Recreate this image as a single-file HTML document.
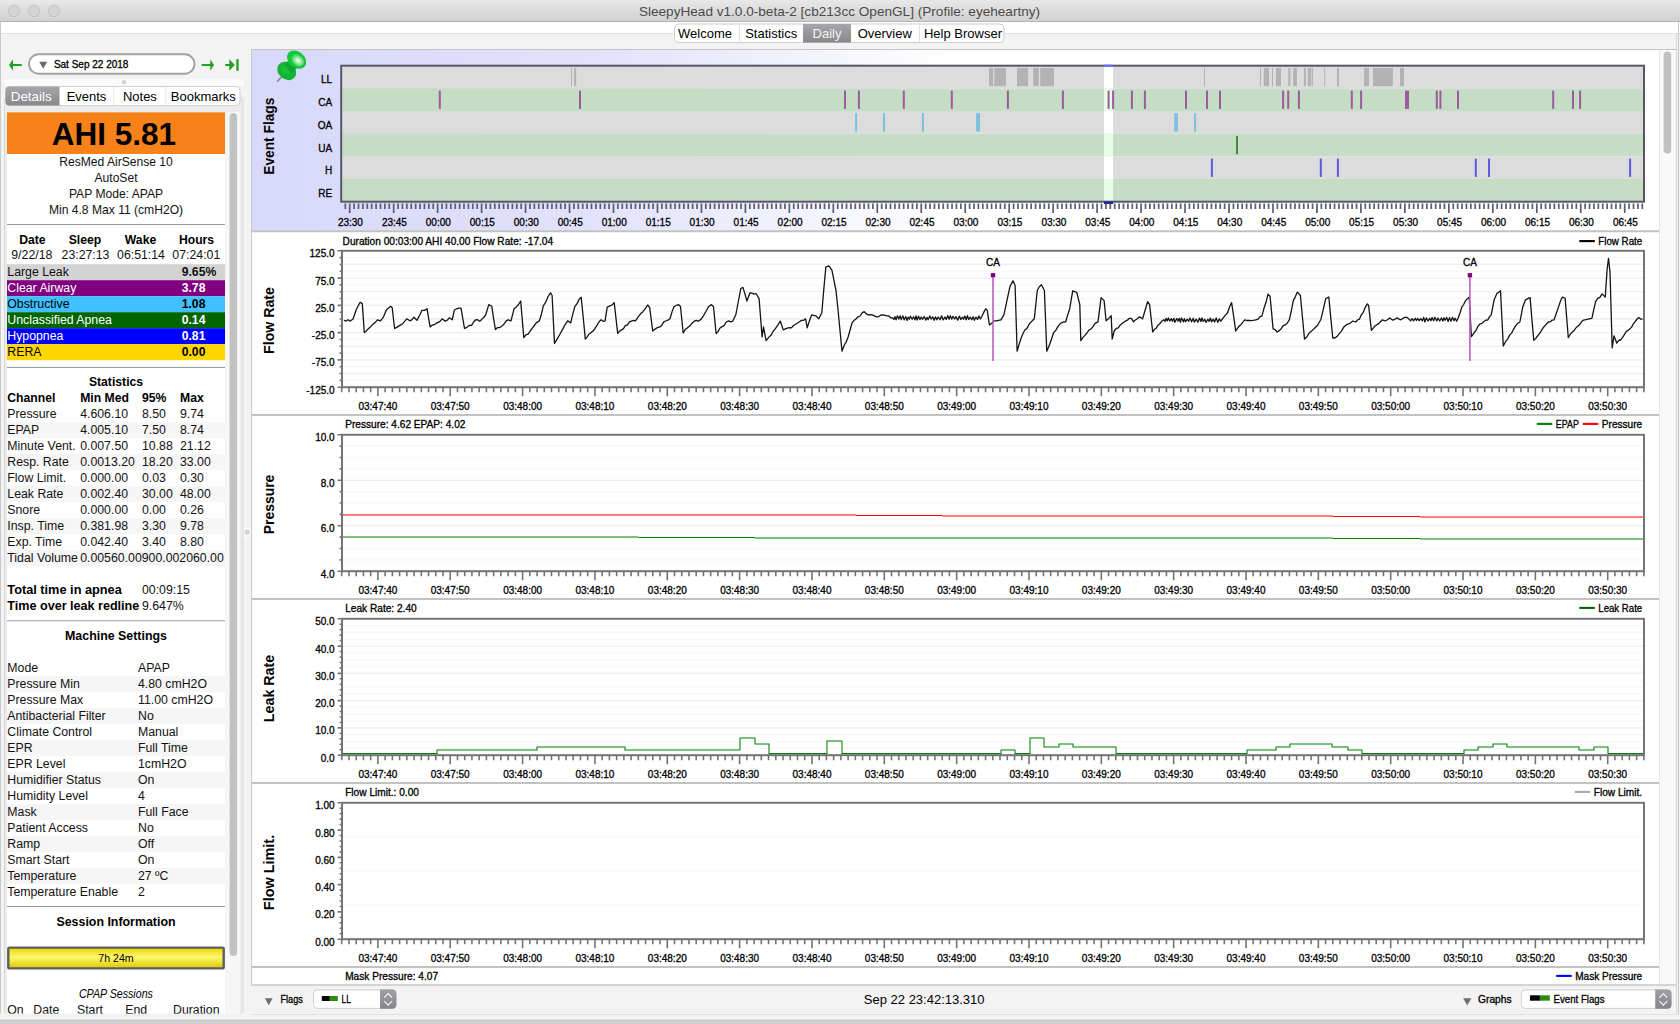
<!DOCTYPE html><html><head><meta charset="utf-8"><style>html,body{margin:0;padding:0;width:1680px;height:1024px;overflow:hidden;background:#f3f3f3}svg{display:block}text{font-family:"Liberation Sans",sans-serif}.sm{stroke:#000;stroke-width:0.3px}</style></head><body><svg width="1680" height="1024" viewBox="0 0 1680 1024"><defs>
<linearGradient id="tbar" x1="0" y1="0" x2="0" y2="1"><stop offset="0" stop-color="#e8e8e8"/><stop offset="1" stop-color="#d1d1d1"/></linearGradient>
<linearGradient id="lav" x1="0" y1="0" x2="1" y2="0"><stop offset="0" stop-color="#d9d9fb"/><stop offset="0.33" stop-color="#dcdcfb"/><stop offset="0.55" stop-color="#ffffff"/><stop offset="1" stop-color="#ffffff"/></linearGradient>
<linearGradient id="selTab" x1="0" y1="0" x2="0" y2="1"><stop offset="0" stop-color="#a6a6ab"/><stop offset="1" stop-color="#87878c"/></linearGradient>
<linearGradient id="step" x1="0" y1="0" x2="0" y2="1"><stop offset="0" stop-color="#a0a0a4"/><stop offset="1" stop-color="#85858a"/></linearGradient>
<radialGradient id="pinHead" cx="0.55" cy="0.5" r="0.6"><stop offset="0" stop-color="#f4fff4"/><stop offset="0.35" stop-color="#a8f0b4"/><stop offset="1" stop-color="#14c83c"/></radialGradient>
<radialGradient id="pinBody" cx="0.4" cy="0.5" r="0.6"><stop offset="0" stop-color="#5fd66c"/><stop offset="1" stop-color="#139d24"/></radialGradient>
</defs><rect x="0.0" y="0.0" width="1680.0" height="1024.0" fill="#f3f3f3" /><rect x="0.0" y="0.0" width="1680.0" height="21.0" fill="url(#tbar)" /><line x1="0.0" y1="21.5" x2="1680.0" y2="21.5" stroke="#b5b5b5" stroke-width="1" /><circle cx="14" cy="10.8" r="5.8" fill="#d4d4d4" stroke="#bcbcbc" stroke-width="0.8"/><circle cx="34" cy="10.8" r="5.8" fill="#d4d4d4" stroke="#bcbcbc" stroke-width="0.8"/><circle cx="54" cy="10.8" r="5.8" fill="#d4d4d4" stroke="#bcbcbc" stroke-width="0.8"/><text x="839.5" y="15.7" font-size="13.6" text-anchor="middle" fill="#4b4b4b" >SleepyHead v1.0.0-beta-2 [cb213cc OpenGL] (Profile: eyeheartny)</text><rect x="0.0" y="22.0" width="1680.0" height="11.0" fill="#ffffff" /><line x1="0.0" y1="33.5" x2="1680.0" y2="33.5" stroke="#e2e2e2" stroke-width="1" /><line x1="0.5" y1="22.0" x2="0.5" y2="1024.0" stroke="#c9c9c9" stroke-width="1" /><line x1="1678.5" y1="22.0" x2="1678.5" y2="1024.0" stroke="#c9c9c9" stroke-width="1" /><rect x="0.0" y="1016.0" width="1680.0" height="8.0" fill="#c6c6c6" /><line x1="0.0" y1="1015.5" x2="1680.0" y2="1015.5" stroke="#bdbdbd" stroke-width="1" /><rect x="674.5" y="24" width="329.5" height="18.5" rx="4" fill="#ffffff" stroke="#cfcfcf" stroke-width="1"/><rect x="803.0" y="24.0" width="48.0" height="18.5" fill="url(#selTab)" /><line x1="739.5" y1="25.0" x2="739.5" y2="42.0" stroke="#e0e0e0" stroke-width="1" /><line x1="919.5" y1="25.0" x2="919.5" y2="42.0" stroke="#e0e0e0" stroke-width="1" /><text x="705.0" y="37.5" font-size="13" text-anchor="middle" >Welcome</text><text x="771.2" y="37.5" font-size="13" text-anchor="middle" >Statistics</text><text x="827.0" y="37.5" font-size="13" text-anchor="middle" fill="#f4f4f4" >Daily</text><text x="884.8" y="37.5" font-size="13" text-anchor="middle" >Overview</text><text x="963.0" y="37.5" font-size="13" text-anchor="middle" >Help Browser</text><path d="M9 65 L13 59.2 L13 70.8 Z" fill="#22a022"/><line x1="12.0" y1="65.0" x2="21.0" y2="65.0" stroke="#22a022" stroke-width="2.2" stroke-linecap="round"/><line x1="202.5" y1="65.0" x2="211.0" y2="65.0" stroke="#22a022" stroke-width="2.2" stroke-linecap="round"/><path d="M214 65 L210.3 59.2 L210.3 70.8 Z" fill="#22a022"/><line x1="226.0" y1="65.0" x2="230.0" y2="65.0" stroke="#22a022" stroke-width="2.2" stroke-linecap="round"/><path d="M234.8 65 L229.3 59.2 L229.3 70.8 Z" fill="#22a022"/><rect x="236.3" y="59.2" width="2.3" height="11.6" fill="#22a022" /><rect x="29" y="54.2" width="165.5" height="19.5" rx="9.75" fill="#ffffff" stroke="#a2a2a2" stroke-width="1.9"/><path d="M39.2 61.8 L47.2 61.8 L43.2 68.8 Z" fill="#6b6b6b"/><text x="53.9" y="67.7" font-size="10" class="sm" >Sat Sep 22 2018</text><rect x="4.0" y="79.3" width="240.0" height="6.5" fill="#fbfbfb" /><circle cx="124" cy="82.3" r="2.3" fill="#d2d2d2"/><rect x="4.5" y="96.5" width="238.5" height="918" rx="4" fill="#ebebeb" stroke="#d9d9d9" stroke-width="1"/><rect x="5.5" y="86.5" width="234.5" height="19" rx="4" fill="#ffffff" stroke="#d2d2d2" stroke-width="1"/><path d="M9.5 86.5 H59.5 V105.5 H9.5 A4 4 0 0 1 5.5 101.5 V90.5 A4 4 0 0 1 9.5 86.5 Z" fill="url(#selTab)"/><line x1="113.8" y1="87.0" x2="113.8" y2="105.0" stroke="#e3e3e3" stroke-width="1" /><line x1="166.0" y1="87.0" x2="166.0" y2="105.0" stroke="#e3e3e3" stroke-width="1" /><text x="31.2" y="101.0" font-size="13.4" text-anchor="middle" fill="#ffffff" >Details</text><text x="86.5" y="101.0" font-size="13" text-anchor="middle" >Events</text><text x="139.9" y="101.0" font-size="13" text-anchor="middle" >Notes</text><text x="203.3" y="101.0" font-size="13" text-anchor="middle" >Bookmarks</text><rect x="7.0" y="112.0" width="218.0" height="902.0" fill="#ffffff" /><rect x="225.3" y="112.0" width="14.7" height="902.0" fill="#f7f7f7" /><rect x="229.6" y="113" width="7.5" height="843" rx="3.75" fill="#c2c2c2"/><rect x="7.0" y="112.3" width="218.0" height="41.7" fill="#f8821a" /><text x="113.9" y="144.6" font-size="31.5" font-weight="bold" text-anchor="middle" >AHI 5.81</text><text x="116.0" y="165.7" font-size="12.1" text-anchor="middle" fill="#111" >ResMed AirSense 10</text><text x="116.0" y="181.7" font-size="12.1" text-anchor="middle" fill="#111" >AutoSet</text><text x="116.0" y="197.7" font-size="12.1" text-anchor="middle" fill="#111" >PAP Mode: APAP</text><text x="116.0" y="213.7" font-size="12.1" text-anchor="middle" fill="#111" >Min 4.8 Max 11 (cmH2O)</text><line x1="7.0" y1="224.5" x2="225.0" y2="224.5" stroke="#9a9a9a" stroke-width="1" /><text x="32.4" y="243.6" font-size="12.2" font-weight="bold" text-anchor="middle" >Date</text><text x="85.0" y="243.6" font-size="12.2" font-weight="bold" text-anchor="middle" >Sleep</text><text x="140.5" y="243.6" font-size="12.2" font-weight="bold" text-anchor="middle" >Wake</text><text x="196.5" y="243.6" font-size="12.2" font-weight="bold" text-anchor="middle" >Hours</text><text x="31.8" y="259.3" font-size="12.3" text-anchor="middle" fill="#111" >9/22/18</text><text x="85.5" y="259.3" font-size="12.3" text-anchor="middle" fill="#111" >23:27:13</text><text x="141.0" y="259.3" font-size="12.3" text-anchor="middle" fill="#111" >06:51:14</text><text x="196.3" y="259.3" font-size="12.3" text-anchor="middle" fill="#111" >07:24:01</text><rect x="7.0" y="264.2" width="218.0" height="16.0" fill="#d3d3d3" /><text x="7.3" y="276.2" font-size="12.3" fill="#111" >Large Leak</text><text x="181.7" y="276.2" font-size="12.2" font-weight="bold" fill="#111" >9.65%</text><rect x="7.0" y="280.2" width="218.0" height="16.0" fill="#800080" /><text x="7.3" y="292.2" font-size="12.3" fill="#fff" >Clear Airway</text><text x="181.7" y="292.2" font-size="12.2" font-weight="bold" fill="#fff" >3.78</text><rect x="7.0" y="296.2" width="218.0" height="16.0" fill="#40c0ff" /><text x="7.3" y="308.2" font-size="12.3" >Obstructive</text><text x="181.7" y="308.2" font-size="12.2" font-weight="bold" >1.08</text><rect x="7.0" y="312.2" width="218.0" height="16.0" fill="#006400" /><text x="7.3" y="324.2" font-size="12.3" fill="#fff" >Unclassified Apnea</text><text x="181.7" y="324.2" font-size="12.2" font-weight="bold" fill="#fff" >0.14</text><rect x="7.0" y="328.2" width="218.0" height="16.0" fill="#0000ff" /><text x="7.3" y="340.2" font-size="12.3" fill="#fff" >Hypopnea</text><text x="181.7" y="340.2" font-size="12.2" font-weight="bold" fill="#fff" >0.81</text><rect x="7.0" y="344.2" width="218.0" height="16.0" fill="#ffd700" /><text x="7.3" y="356.2" font-size="12.3" >RERA</text><text x="181.7" y="356.2" font-size="12.2" font-weight="bold" >0.00</text><line x1="7.0" y1="367.5" x2="225.0" y2="367.5" stroke="#9a9a9a" stroke-width="1" /><text x="116.0" y="386.0" font-size="12.2" font-weight="bold" text-anchor="middle" >Statistics</text><text x="7.3" y="401.8" font-size="12.2" font-weight="bold" >Channel</text><text x="80.2" y="401.8" font-size="12.2" font-weight="bold" >Min</text><text x="104.5" y="401.8" font-size="12.2" font-weight="bold" >Med</text><text x="142.0" y="401.8" font-size="12.2" font-weight="bold" >95%</text><text x="180.0" y="401.8" font-size="12.2" font-weight="bold" >Max</text><text x="7.3" y="418.0" font-size="12.3" fill="#111" >Pressure</text><text x="80.2" y="418.0" font-size="12.3" fill="#111" >4.606.10</text><text x="142.0" y="418.0" font-size="12.3" fill="#111" >8.50</text><text x="180.0" y="418.0" font-size="12.3" fill="#111" >9.74</text><rect x="7.0" y="422.0" width="218.0" height="16.0" fill="#f6f6f6" /><text x="7.3" y="434.0" font-size="12.3" fill="#111" >EPAP</text><text x="80.2" y="434.0" font-size="12.3" fill="#111" >4.005.10</text><text x="142.0" y="434.0" font-size="12.3" fill="#111" >7.50</text><text x="180.0" y="434.0" font-size="12.3" fill="#111" >8.74</text><text x="7.3" y="450.0" font-size="12.3" fill="#111" >Minute Vent.</text><text x="80.2" y="450.0" font-size="12.3" fill="#111" >0.007.50</text><text x="142.0" y="450.0" font-size="12.3" fill="#111" >10.88</text><text x="180.0" y="450.0" font-size="12.3" fill="#111" >21.12</text><rect x="7.0" y="454.0" width="218.0" height="16.0" fill="#f6f6f6" /><text x="7.3" y="466.0" font-size="12.3" fill="#111" >Resp. Rate</text><text x="80.2" y="466.0" font-size="12.3" fill="#111" >0.0013.20</text><text x="142.0" y="466.0" font-size="12.3" fill="#111" >18.20</text><text x="180.0" y="466.0" font-size="12.3" fill="#111" >33.00</text><text x="7.3" y="482.0" font-size="12.3" fill="#111" >Flow Limit.</text><text x="80.2" y="482.0" font-size="12.3" fill="#111" >0.000.00</text><text x="142.0" y="482.0" font-size="12.3" fill="#111" >0.03</text><text x="180.0" y="482.0" font-size="12.3" fill="#111" >0.30</text><rect x="7.0" y="486.0" width="218.0" height="16.0" fill="#f6f6f6" /><text x="7.3" y="498.0" font-size="12.3" fill="#111" >Leak Rate</text><text x="80.2" y="498.0" font-size="12.3" fill="#111" >0.002.40</text><text x="142.0" y="498.0" font-size="12.3" fill="#111" >30.00</text><text x="180.0" y="498.0" font-size="12.3" fill="#111" >48.00</text><text x="7.3" y="514.0" font-size="12.3" fill="#111" >Snore</text><text x="80.2" y="514.0" font-size="12.3" fill="#111" >0.000.00</text><text x="142.0" y="514.0" font-size="12.3" fill="#111" >0.00</text><text x="180.0" y="514.0" font-size="12.3" fill="#111" >0.26</text><rect x="7.0" y="518.0" width="218.0" height="16.0" fill="#f6f6f6" /><text x="7.3" y="530.0" font-size="12.3" fill="#111" >Insp. Time</text><text x="80.2" y="530.0" font-size="12.3" fill="#111" >0.381.98</text><text x="142.0" y="530.0" font-size="12.3" fill="#111" >3.30</text><text x="180.0" y="530.0" font-size="12.3" fill="#111" >9.78</text><text x="7.3" y="546.0" font-size="12.3" fill="#111" >Exp. Time</text><text x="80.2" y="546.0" font-size="12.3" fill="#111" >0.042.40</text><text x="142.0" y="546.0" font-size="12.3" fill="#111" >3.40</text><text x="180.0" y="546.0" font-size="12.3" fill="#111" >8.80</text><rect x="7.0" y="550.0" width="218.0" height="16.0" fill="#f6f6f6" /><text x="7.3" y="562.0" font-size="12.3" fill="#111" >Tidal Volume</text><text x="80.2" y="562.0" font-size="12.3" fill="#111" >0.00560.00900.002060.00</text><text x="7.3" y="594.0" font-size="12" font-weight="bold" textLength="114.5" lengthAdjust="spacingAndGlyphs">Total time in apnea</text><text x="142.0" y="594.0" font-size="12.3" fill="#111" >00:09:15</text><text x="7.3" y="610.0" font-size="12" font-weight="bold" textLength="132" lengthAdjust="spacingAndGlyphs">Time over leak redline</text><text x="142.0" y="610.0" font-size="12.3" fill="#111" >9.647%</text><line x1="7.0" y1="620.8" x2="225.0" y2="620.8" stroke="#9a9a9a" stroke-width="1" /><text x="116.0" y="639.8" font-size="12.4" font-weight="bold" text-anchor="middle" >Machine Settings</text><text x="7.3" y="671.5" font-size="12.3" fill="#111" >Mode</text><text x="138.0" y="671.5" font-size="12.3" fill="#111" >APAP</text><rect x="7.0" y="676.0" width="218.0" height="16.0" fill="#f6f6f6" /><text x="7.3" y="687.5" font-size="12.3" fill="#111" >Pressure Min</text><text x="138.0" y="687.5" font-size="12.3" fill="#111" >4.80 cmH2O</text><text x="7.3" y="703.5" font-size="12.3" fill="#111" >Pressure Max</text><text x="138.0" y="703.5" font-size="12.3" fill="#111" >11.00 cmH2O</text><rect x="7.0" y="708.0" width="218.0" height="16.0" fill="#f6f6f6" /><text x="7.3" y="719.5" font-size="12.3" fill="#111" >Antibacterial Filter</text><text x="138.0" y="719.5" font-size="12.3" fill="#111" >No</text><text x="7.3" y="735.5" font-size="12.3" fill="#111" >Climate Control</text><text x="138.0" y="735.5" font-size="12.3" fill="#111" >Manual</text><rect x="7.0" y="740.0" width="218.0" height="16.0" fill="#f6f6f6" /><text x="7.3" y="751.5" font-size="12.3" fill="#111" >EPR</text><text x="138.0" y="751.5" font-size="12.3" fill="#111" >Full Time</text><text x="7.3" y="767.5" font-size="12.3" fill="#111" >EPR Level</text><text x="138.0" y="767.5" font-size="12.3" fill="#111" >1cmH2O</text><rect x="7.0" y="772.0" width="218.0" height="16.0" fill="#f6f6f6" /><text x="7.3" y="783.5" font-size="12.3" fill="#111" >Humidifier Status</text><text x="138.0" y="783.5" font-size="12.3" fill="#111" >On</text><text x="7.3" y="799.5" font-size="12.3" fill="#111" >Humidity Level</text><text x="138.0" y="799.5" font-size="12.3" fill="#111" >4</text><rect x="7.0" y="804.0" width="218.0" height="16.0" fill="#f6f6f6" /><text x="7.3" y="815.5" font-size="12.3" fill="#111" >Mask</text><text x="138.0" y="815.5" font-size="12.3" fill="#111" >Full Face</text><text x="7.3" y="831.5" font-size="12.3" fill="#111" >Patient Access</text><text x="138.0" y="831.5" font-size="12.3" fill="#111" >No</text><rect x="7.0" y="836.0" width="218.0" height="16.0" fill="#f6f6f6" /><text x="7.3" y="847.5" font-size="12.3" fill="#111" >Ramp</text><text x="138.0" y="847.5" font-size="12.3" fill="#111" >Off</text><text x="7.3" y="863.5" font-size="12.3" fill="#111" >Smart Start</text><text x="138.0" y="863.5" font-size="12.3" fill="#111" >On</text><rect x="7.0" y="868.0" width="218.0" height="16.0" fill="#f6f6f6" /><text x="7.3" y="879.5" font-size="12.3" fill="#111" >Temperature</text><text x="138.0" y="879.5" font-size="12.3" fill="#111" >27 ºC</text><text x="7.3" y="895.5" font-size="12.3" fill="#111" >Temperature Enable</text><text x="138.0" y="895.5" font-size="12.3" fill="#111" >2</text><line x1="7.0" y1="906.5" x2="225.0" y2="906.5" stroke="#9a9a9a" stroke-width="1" /><text x="116.0" y="925.5" font-size="12.4" font-weight="bold" text-anchor="middle" >Session Information</text><linearGradient id="ybar" x1="0" y1="0" x2="0" y2="1"><stop offset="0" stop-color="#e6d400"/><stop offset="0.45" stop-color="#fff86e"/><stop offset="1" stop-color="#dcc800"/></linearGradient><rect x="8.3" y="947.6" width="215.4" height="20.8" rx="1" fill="url(#ybar)" stroke="#5e5e5e" stroke-width="2.4"/><text x="116.0" y="961.6" font-size="10.6" text-anchor="middle" >7h 24m</text><text x="115.9" y="997.6" font-size="12" text-anchor="middle" font-style="italic" textLength="74" lengthAdjust="spacingAndGlyphs">CPAP Sessions</text><text x="7.3" y="1013.5" font-size="12.3" fill="#111" >On</text><text x="33.3" y="1013.5" font-size="12.3" fill="#111" >Date</text><text x="77.0" y="1013.5" font-size="12.3" fill="#111" >Start</text><text x="125.2" y="1013.5" font-size="12.3" fill="#111" >End</text><text x="173.0" y="1013.5" font-size="12.3" fill="#111" >Duration</text><rect x="0.0" y="1013.6" width="250.0" height="2.4" fill="#f3f3f3" /><rect x="251.0" y="49.5" width="1408.0" height="935.5" fill="#ffffff" /><linearGradient id="lav2" gradientUnits="userSpaceOnUse" x1="251" y1="0" x2="1659" y2="0"><stop offset="0" stop-color="#d8d8fa"/><stop offset="0.248" stop-color="#e2e2fc"/><stop offset="0.496" stop-color="#ffffff"/><stop offset="1" stop-color="#ffffff"/></linearGradient><rect x="251.0" y="49.5" width="1408.0" height="181.0" fill="url(#lav2)" /><line x1="251.0" y1="49.5" x2="1677.0" y2="49.5" stroke="#c4c4c4" stroke-width="1" /><line x1="251.5" y1="49.5" x2="251.5" y2="985.0" stroke="#c9c9c9" stroke-width="1" /><rect x="341.2" y="65.7" width="1302.8" height="22.7" fill="#dcdcdc" /><text x="332.2" y="83.4" font-size="10" text-anchor="end" class="sm" >LL</text><rect x="341.2" y="88.4" width="1302.8" height="22.7" fill="#c6ddc5" /><text x="332.2" y="106.2" font-size="10" text-anchor="end" class="sm" >CA</text><rect x="341.2" y="111.0" width="1302.8" height="22.7" fill="#dcdcdc" /><text x="332.2" y="128.9" font-size="10" text-anchor="end" class="sm" >OA</text><rect x="341.2" y="133.7" width="1302.8" height="22.7" fill="#c6ddc5" /><text x="332.2" y="151.7" font-size="10" text-anchor="end" class="sm" >UA</text><rect x="341.2" y="156.4" width="1302.8" height="22.7" fill="#dcdcdc" /><text x="332.2" y="174.4" font-size="10" text-anchor="end" class="sm" >H</text><rect x="341.2" y="179.0" width="1302.8" height="22.7" fill="#c6ddc5" /><text x="332.2" y="197.2" font-size="10" text-anchor="end" class="sm" >RE</text><rect x="1104.0" y="65.7" width="9.1" height="22.7" fill="#ffffff" /><rect x="1104.0" y="88.4" width="9.1" height="22.7" fill="#e8fde6" /><rect x="1104.0" y="111.0" width="9.1" height="22.7" fill="#ffffff" /><rect x="1104.0" y="133.7" width="9.1" height="22.7" fill="#e8fde6" /><rect x="1104.0" y="156.4" width="9.1" height="22.7" fill="#ffffff" /><rect x="1104.0" y="179.0" width="9.1" height="22.7" fill="#e8fde6" /><rect x="571.0" y="67.9" width="1.0" height="18.3" fill="#b3b3b3" /><rect x="574.0" y="67.9" width="2.2" height="18.3" fill="#b3b3b3" /><rect x="989.0" y="67.9" width="4.1" height="18.3" fill="#b3b3b3" /><rect x="994.3" y="67.9" width="11.6" height="18.3" fill="#b3b3b3" /><rect x="1017.0" y="67.9" width="11.1" height="18.3" fill="#b3b3b3" /><rect x="1033.2" y="67.9" width="5.6" height="18.3" fill="#b3b3b3" /><rect x="1040.2" y="67.9" width="13.8" height="18.3" fill="#b3b3b3" /><rect x="1204.0" y="67.9" width="1.0" height="18.3" fill="#b3b3b3" /><rect x="1260.0" y="67.9" width="1.0" height="18.3" fill="#b3b3b3" /><rect x="1263.9" y="67.9" width="5.1" height="18.3" fill="#b3b3b3" /><rect x="1272.0" y="67.9" width="1.0" height="18.3" fill="#b3b3b3" /><rect x="1276.0" y="67.9" width="5.0" height="18.3" fill="#b3b3b3" /><rect x="1288.3" y="67.9" width="2.0" height="18.3" fill="#b3b3b3" /><rect x="1293.2" y="67.9" width="3.7" height="18.3" fill="#b3b3b3" /><rect x="1303.9" y="67.9" width="2.0" height="18.3" fill="#b3b3b3" /><rect x="1307.8" y="67.9" width="3.6" height="18.3" fill="#b3b3b3" /><rect x="1312.1" y="67.9" width="1.0" height="18.3" fill="#b3b3b3" /><rect x="1324.2" y="67.9" width="1.0" height="18.3" fill="#b3b3b3" /><rect x="1337.0" y="67.9" width="2.0" height="18.3" fill="#b3b3b3" /><rect x="1364.1" y="67.9" width="4.9" height="18.3" fill="#b3b3b3" /><rect x="1373.0" y="67.9" width="19.9" height="18.3" fill="#b3b3b3" /><rect x="1400.0" y="67.9" width="4.0" height="18.3" fill="#b3b3b3" /><rect x="438.8" y="90.6" width="2.0" height="18.3" fill="#9d5a9c" /><rect x="579.0" y="90.6" width="2.0" height="18.3" fill="#9d5a9c" /><rect x="844.0" y="90.6" width="2.0" height="18.3" fill="#9d5a9c" /><rect x="857.9" y="90.6" width="2.0" height="18.3" fill="#9d5a9c" /><rect x="902.8" y="90.6" width="2.0" height="18.3" fill="#9d5a9c" /><rect x="950.8" y="90.6" width="2.0" height="18.3" fill="#9d5a9c" /><rect x="1006.9" y="90.6" width="2.0" height="18.3" fill="#9d5a9c" /><rect x="1061.9" y="90.6" width="2.0" height="18.3" fill="#9d5a9c" /><rect x="1107.6" y="90.6" width="2.0" height="18.3" fill="#9d5a9c" /><rect x="1112.1" y="90.6" width="2.0" height="18.3" fill="#9d5a9c" /><rect x="1130.9" y="90.6" width="2.0" height="18.3" fill="#9d5a9c" /><rect x="1143.9" y="90.6" width="2.0" height="18.3" fill="#9d5a9c" /><rect x="1185.0" y="90.6" width="2.0" height="18.3" fill="#9d5a9c" /><rect x="1206.0" y="90.6" width="2.0" height="18.3" fill="#9d5a9c" /><rect x="1219.0" y="90.6" width="2.0" height="18.3" fill="#9d5a9c" /><rect x="1282.1" y="90.6" width="2.0" height="18.3" fill="#9d5a9c" /><rect x="1287.2" y="90.6" width="2.0" height="18.3" fill="#9d5a9c" /><rect x="1297.9" y="90.6" width="2.0" height="18.3" fill="#9d5a9c" /><rect x="1350.8" y="90.6" width="2.0" height="18.3" fill="#9d5a9c" /><rect x="1360.1" y="90.6" width="2.0" height="18.3" fill="#9d5a9c" /><rect x="1435.8" y="90.6" width="2.0" height="18.3" fill="#9d5a9c" /><rect x="1439.4" y="90.6" width="2.0" height="18.3" fill="#9d5a9c" /><rect x="1457.0" y="90.6" width="2.0" height="18.3" fill="#9d5a9c" /><rect x="1552.2" y="90.6" width="2.0" height="18.3" fill="#9d5a9c" /><rect x="1572.0" y="90.6" width="2.0" height="18.3" fill="#9d5a9c" /><rect x="1579.1" y="90.6" width="2.0" height="18.3" fill="#9d5a9c" /><rect x="1405.0" y="90.6" width="4.0" height="18.3" fill="#9d5a9c" /><rect x="855.1" y="113.2" width="2.0" height="18.3" fill="#7cc0e2" /><rect x="883.0" y="113.2" width="2.0" height="18.3" fill="#7cc0e2" /><rect x="921.9" y="113.2" width="2.0" height="18.3" fill="#7cc0e2" /><rect x="1194.1" y="113.2" width="2.0" height="18.3" fill="#7cc0e2" /><rect x="976.1" y="113.2" width="3.9" height="18.3" fill="#7cc0e2" /><rect x="1174.2" y="113.2" width="3.7" height="18.3" fill="#7cc0e2" /><rect x="1236.0" y="135.9" width="2.0" height="18.3" fill="#3f8a3f" /><rect x="1210.9" y="158.6" width="2.0" height="18.3" fill="#5a5ae6" /><rect x="1319.8" y="158.6" width="2.0" height="18.3" fill="#5a5ae6" /><rect x="1336.9" y="158.6" width="2.0" height="18.3" fill="#5a5ae6" /><rect x="1474.8" y="158.6" width="2.0" height="18.3" fill="#5a5ae6" /><rect x="1488.0" y="158.6" width="2.0" height="18.3" fill="#5a5ae6" /><rect x="1629.1" y="158.6" width="2.0" height="18.3" fill="#5a5ae6" /><rect x="341.2" y="65.7" width="1302.8" height="136.0" fill="none" stroke="#575768" stroke-width="2"/><line x1="1104.0" y1="65.7" x2="1113.1" y2="65.7" stroke="#6a6aff" stroke-width="2" /><rect x="1104.0" y="201.5" width="9.1" height="2.5" fill="#2020a0" /><path d="M345.30 203.5v5.5M349.70 203.5v9.5M354.10 203.5v5.5M358.49 203.5v5.5M362.89 203.5v5.5M367.29 203.5v5.5M371.68 203.5v5.5M376.08 203.5v5.5M380.48 203.5v5.5M384.87 203.5v5.5M389.27 203.5v5.5M393.67 203.5v9.5M398.06 203.5v5.5M402.46 203.5v5.5M406.86 203.5v5.5M411.25 203.5v5.5M415.65 203.5v5.5M420.05 203.5v5.5M424.44 203.5v5.5M428.84 203.5v5.5M433.24 203.5v5.5M437.63 203.5v9.5M442.03 203.5v5.5M446.43 203.5v5.5M450.82 203.5v5.5M455.22 203.5v5.5M459.62 203.5v5.5M464.01 203.5v5.5M468.41 203.5v5.5M472.80 203.5v5.5M477.20 203.5v5.5M481.60 203.5v9.5M485.99 203.5v5.5M490.39 203.5v5.5M494.79 203.5v5.5M499.18 203.5v5.5M503.58 203.5v5.5M507.98 203.5v5.5M512.37 203.5v5.5M516.77 203.5v5.5M521.17 203.5v5.5M525.56 203.5v9.5M529.96 203.5v5.5M534.36 203.5v5.5M538.75 203.5v5.5M543.15 203.5v5.5M547.55 203.5v5.5M551.94 203.5v5.5M556.34 203.5v5.5M560.74 203.5v5.5M565.13 203.5v5.5M569.53 203.5v9.5M573.93 203.5v5.5M578.32 203.5v5.5M582.72 203.5v5.5M587.12 203.5v5.5M591.51 203.5v5.5M595.91 203.5v5.5M600.31 203.5v5.5M604.70 203.5v5.5M609.10 203.5v5.5M613.50 203.5v9.5M617.89 203.5v5.5M622.29 203.5v5.5M626.69 203.5v5.5M631.08 203.5v5.5M635.48 203.5v5.5M639.88 203.5v5.5M644.27 203.5v5.5M648.67 203.5v5.5M653.07 203.5v5.5M657.46 203.5v9.5M661.86 203.5v5.5M666.26 203.5v5.5M670.65 203.5v5.5M675.05 203.5v5.5M679.44 203.5v5.5M683.84 203.5v5.5M688.24 203.5v5.5M692.63 203.5v5.5M697.03 203.5v5.5M701.43 203.5v9.5M705.82 203.5v5.5M710.22 203.5v5.5M714.62 203.5v5.5M719.01 203.5v5.5M723.41 203.5v5.5M727.81 203.5v5.5M732.20 203.5v5.5M736.60 203.5v5.5M741.00 203.5v5.5M745.39 203.5v9.5M749.79 203.5v5.5M754.19 203.5v5.5M758.58 203.5v5.5M762.98 203.5v5.5M767.38 203.5v5.5M771.77 203.5v5.5M776.17 203.5v5.5M780.57 203.5v5.5M784.96 203.5v5.5M789.36 203.5v9.5M793.76 203.5v5.5M798.15 203.5v5.5M802.55 203.5v5.5M806.95 203.5v5.5M811.34 203.5v5.5M815.74 203.5v5.5M820.14 203.5v5.5M824.53 203.5v5.5M828.93 203.5v5.5M833.33 203.5v9.5M837.72 203.5v5.5M842.12 203.5v5.5M846.52 203.5v5.5M850.91 203.5v5.5M855.31 203.5v5.5M859.71 203.5v5.5M864.10 203.5v5.5M868.50 203.5v5.5M872.90 203.5v5.5M877.29 203.5v9.5M881.69 203.5v5.5M886.09 203.5v5.5M890.48 203.5v5.5M894.88 203.5v5.5M899.28 203.5v5.5M903.67 203.5v5.5M908.07 203.5v5.5M912.46 203.5v5.5M916.86 203.5v5.5M921.26 203.5v9.5M925.65 203.5v5.5M930.05 203.5v5.5M934.45 203.5v5.5M938.84 203.5v5.5M943.24 203.5v5.5M947.64 203.5v5.5M952.03 203.5v5.5M956.43 203.5v5.5M960.83 203.5v5.5M965.22 203.5v9.5M969.62 203.5v5.5M974.02 203.5v5.5M978.41 203.5v5.5M982.81 203.5v5.5M987.21 203.5v5.5M991.60 203.5v5.5M996.00 203.5v5.5M1000.40 203.5v5.5M1004.79 203.5v5.5M1009.19 203.5v9.5M1013.59 203.5v5.5M1017.98 203.5v5.5M1022.38 203.5v5.5M1026.78 203.5v5.5M1031.17 203.5v5.5M1035.57 203.5v5.5M1039.97 203.5v5.5M1044.36 203.5v5.5M1048.76 203.5v5.5M1053.16 203.5v9.5M1057.55 203.5v5.5M1061.95 203.5v5.5M1066.35 203.5v5.5M1070.74 203.5v5.5M1075.14 203.5v5.5M1079.54 203.5v5.5M1083.93 203.5v5.5M1088.33 203.5v5.5M1092.73 203.5v5.5M1097.12 203.5v9.5M1101.52 203.5v5.5M1105.92 203.5v5.5M1110.31 203.5v5.5M1114.71 203.5v5.5M1119.11 203.5v5.5M1123.50 203.5v5.5M1127.90 203.5v5.5M1132.29 203.5v5.5M1136.69 203.5v5.5M1141.09 203.5v9.5M1145.48 203.5v5.5M1149.88 203.5v5.5M1154.28 203.5v5.5M1158.67 203.5v5.5M1163.07 203.5v5.5M1167.47 203.5v5.5M1171.86 203.5v5.5M1176.26 203.5v5.5M1180.66 203.5v5.5M1185.05 203.5v9.5M1189.45 203.5v5.5M1193.85 203.5v5.5M1198.24 203.5v5.5M1202.64 203.5v5.5M1207.04 203.5v5.5M1211.43 203.5v5.5M1215.83 203.5v5.5M1220.23 203.5v5.5M1224.62 203.5v5.5M1229.02 203.5v9.5M1233.42 203.5v5.5M1237.81 203.5v5.5M1242.21 203.5v5.5M1246.61 203.5v5.5M1251.00 203.5v5.5M1255.40 203.5v5.5M1259.80 203.5v5.5M1264.19 203.5v5.5M1268.59 203.5v5.5M1272.99 203.5v9.5M1277.38 203.5v5.5M1281.78 203.5v5.5M1286.18 203.5v5.5M1290.57 203.5v5.5M1294.97 203.5v5.5M1299.37 203.5v5.5M1303.76 203.5v5.5M1308.16 203.5v5.5M1312.56 203.5v5.5M1316.95 203.5v9.5M1321.35 203.5v5.5M1325.75 203.5v5.5M1330.14 203.5v5.5M1334.54 203.5v5.5M1338.93 203.5v5.5M1343.33 203.5v5.5M1347.73 203.5v5.5M1352.12 203.5v5.5M1356.52 203.5v5.5M1360.92 203.5v9.5M1365.31 203.5v5.5M1369.71 203.5v5.5M1374.11 203.5v5.5M1378.50 203.5v5.5M1382.90 203.5v5.5M1387.30 203.5v5.5M1391.69 203.5v5.5M1396.09 203.5v5.5M1400.49 203.5v5.5M1404.88 203.5v9.5M1409.28 203.5v5.5M1413.68 203.5v5.5M1418.07 203.5v5.5M1422.47 203.5v5.5M1426.87 203.5v5.5M1431.26 203.5v5.5M1435.66 203.5v5.5M1440.06 203.5v5.5M1444.45 203.5v5.5M1448.85 203.5v9.5M1453.25 203.5v5.5M1457.64 203.5v5.5M1462.04 203.5v5.5M1466.44 203.5v5.5M1470.83 203.5v5.5M1475.23 203.5v5.5M1479.63 203.5v5.5M1484.02 203.5v5.5M1488.42 203.5v5.5M1492.82 203.5v9.5M1497.21 203.5v5.5M1501.61 203.5v5.5M1506.01 203.5v5.5M1510.40 203.5v5.5M1514.80 203.5v5.5M1519.20 203.5v5.5M1523.59 203.5v5.5M1527.99 203.5v5.5M1532.39 203.5v5.5M1536.78 203.5v9.5M1541.18 203.5v5.5M1545.58 203.5v5.5M1549.97 203.5v5.5M1554.37 203.5v5.5M1558.77 203.5v5.5M1563.16 203.5v5.5M1567.56 203.5v5.5M1571.95 203.5v5.5M1576.35 203.5v5.5M1580.75 203.5v9.5M1585.14 203.5v5.5M1589.54 203.5v5.5M1593.94 203.5v5.5M1598.33 203.5v5.5M1602.73 203.5v5.5M1607.13 203.5v5.5M1611.52 203.5v5.5M1615.92 203.5v5.5M1620.32 203.5v5.5M1624.71 203.5v9.5M1629.11 203.5v5.5M1633.51 203.5v5.5M1637.90 203.5v5.5M1642.30 203.5v5.5" stroke="#5c5c6e" stroke-width="1.7" fill="none"/><text x="350.4" y="225.9" font-size="10" text-anchor="middle" class="sm" >23:30</text><text x="394.4" y="225.9" font-size="10" text-anchor="middle" class="sm" >23:45</text><text x="438.3" y="225.9" font-size="10" text-anchor="middle" class="sm" >00:00</text><text x="482.3" y="225.9" font-size="10" text-anchor="middle" class="sm" >00:15</text><text x="526.3" y="225.9" font-size="10" text-anchor="middle" class="sm" >00:30</text><text x="570.2" y="225.9" font-size="10" text-anchor="middle" class="sm" >00:45</text><text x="614.2" y="225.9" font-size="10" text-anchor="middle" class="sm" >01:00</text><text x="658.2" y="225.9" font-size="10" text-anchor="middle" class="sm" >01:15</text><text x="702.1" y="225.9" font-size="10" text-anchor="middle" class="sm" >01:30</text><text x="746.1" y="225.9" font-size="10" text-anchor="middle" class="sm" >01:45</text><text x="790.1" y="225.9" font-size="10" text-anchor="middle" class="sm" >02:00</text><text x="834.0" y="225.9" font-size="10" text-anchor="middle" class="sm" >02:15</text><text x="878.0" y="225.9" font-size="10" text-anchor="middle" class="sm" >02:30</text><text x="922.0" y="225.9" font-size="10" text-anchor="middle" class="sm" >02:45</text><text x="965.9" y="225.9" font-size="10" text-anchor="middle" class="sm" >03:00</text><text x="1009.9" y="225.9" font-size="10" text-anchor="middle" class="sm" >03:15</text><text x="1053.9" y="225.9" font-size="10" text-anchor="middle" class="sm" >03:30</text><text x="1097.8" y="225.9" font-size="10" text-anchor="middle" class="sm" >03:45</text><text x="1141.8" y="225.9" font-size="10" text-anchor="middle" class="sm" >04:00</text><text x="1185.8" y="225.9" font-size="10" text-anchor="middle" class="sm" >04:15</text><text x="1229.7" y="225.9" font-size="10" text-anchor="middle" class="sm" >04:30</text><text x="1273.7" y="225.9" font-size="10" text-anchor="middle" class="sm" >04:45</text><text x="1317.7" y="225.9" font-size="10" text-anchor="middle" class="sm" >05:00</text><text x="1361.6" y="225.9" font-size="10" text-anchor="middle" class="sm" >05:15</text><text x="1405.6" y="225.9" font-size="10" text-anchor="middle" class="sm" >05:30</text><text x="1449.6" y="225.9" font-size="10" text-anchor="middle" class="sm" >05:45</text><text x="1493.5" y="225.9" font-size="10" text-anchor="middle" class="sm" >06:00</text><text x="1537.5" y="225.9" font-size="10" text-anchor="middle" class="sm" >06:15</text><text x="1581.4" y="225.9" font-size="10" text-anchor="middle" class="sm" >06:30</text><text x="1625.4" y="225.9" font-size="10" text-anchor="middle" class="sm" >06:45</text><text transform="translate(274.4,136.2) rotate(-90)" font-size="14.9" font-weight="bold" text-anchor="middle" textLength="77.2" lengthAdjust="spacingAndGlyphs">Event Flags</text><g>
<line x1="281" y1="77.5" x2="277.6" y2="81.2" stroke="#8a7f8c" stroke-width="1.6" stroke-linecap="round"/>
<ellipse cx="286.7" cy="71" rx="10.3" ry="8.3" transform="rotate(40 286.7 71)" fill="#12b432"/>
<ellipse cx="285.5" cy="70" rx="6" ry="4" transform="rotate(40 285.5 70)" fill="#20c040" opacity="0.6"/>
<path d="M284 64 L292 58 L299 66.5 L291 73 Z" fill="#0fa82e"/>
<ellipse cx="296.6" cy="59.6" rx="10.6" ry="7.9" transform="rotate(40 296.6 59.6)" fill="#14c83c"/>
<ellipse cx="297.6" cy="60.2" rx="7.2" ry="5.2" transform="rotate(40 297.6 60.2)" fill="url(#pinHead)"/>
</g><line x1="251.0" y1="231.3" x2="1659.0" y2="231.3" stroke="#c2c2c2" stroke-width="2" /><text x="342.6" y="244.7" font-size="10.15" class="sm" >Duration 00:03:00 AHI 40.00 Flow Rate: -17.04</text><text x="1598.3" y="244.7" font-size="10" class="sm" textLength="43.9" lengthAdjust="spacingAndGlyphs">Flow Rate</text><line x1="1579.3" y1="241.1" x2="1594.8" y2="241.1" stroke="#000000" stroke-width="2.1" /><line x1="342.0" y1="257.6" x2="1644.0" y2="257.6" stroke="#f8f8f8" stroke-width="1.3" /><line x1="342.0" y1="264.4" x2="1644.0" y2="264.4" stroke="#eeeeee" stroke-width="1.3" /><line x1="342.0" y1="271.3" x2="1644.0" y2="271.3" stroke="#f8f8f8" stroke-width="1.3" /><line x1="342.0" y1="278.1" x2="1644.0" y2="278.1" stroke="#eeeeee" stroke-width="1.3" /><line x1="342.0" y1="284.9" x2="1644.0" y2="284.9" stroke="#f8f8f8" stroke-width="1.3" /><line x1="342.0" y1="291.7" x2="1644.0" y2="291.7" stroke="#eeeeee" stroke-width="1.3" /><line x1="342.0" y1="298.5" x2="1644.0" y2="298.5" stroke="#f8f8f8" stroke-width="1.3" /><line x1="342.0" y1="305.4" x2="1644.0" y2="305.4" stroke="#eeeeee" stroke-width="1.3" /><line x1="342.0" y1="312.2" x2="1644.0" y2="312.2" stroke="#f8f8f8" stroke-width="1.3" /><line x1="342.0" y1="319.0" x2="1644.0" y2="319.0" stroke="#eeeeee" stroke-width="1.3" /><line x1="342.0" y1="325.8" x2="1644.0" y2="325.8" stroke="#f8f8f8" stroke-width="1.3" /><line x1="342.0" y1="332.6" x2="1644.0" y2="332.6" stroke="#eeeeee" stroke-width="1.3" /><line x1="342.0" y1="339.5" x2="1644.0" y2="339.5" stroke="#f8f8f8" stroke-width="1.3" /><line x1="342.0" y1="346.3" x2="1644.0" y2="346.3" stroke="#eeeeee" stroke-width="1.3" /><line x1="342.0" y1="353.1" x2="1644.0" y2="353.1" stroke="#f8f8f8" stroke-width="1.3" /><line x1="342.0" y1="359.9" x2="1644.0" y2="359.9" stroke="#eeeeee" stroke-width="1.3" /><line x1="342.0" y1="366.7" x2="1644.0" y2="366.7" stroke="#f8f8f8" stroke-width="1.3" /><line x1="342.0" y1="373.6" x2="1644.0" y2="373.6" stroke="#eeeeee" stroke-width="1.3" /><line x1="342.0" y1="380.4" x2="1644.0" y2="380.4" stroke="#f8f8f8" stroke-width="1.3" /><path d="M337.6 250.80H342.0M339.6 257.62H342.0M339.6 264.44H342.0M339.6 271.26H342.0M337.6 278.08H342.0M339.6 284.90H342.0M339.6 291.72H342.0M339.6 298.54H342.0M337.6 305.36H342.0M339.6 312.18H342.0M339.6 319.00H342.0M339.6 325.82H342.0M337.6 332.64H342.0M339.6 339.46H342.0M339.6 346.28H342.0M339.6 353.10H342.0M337.6 359.92H342.0M339.6 366.74H342.0M339.6 373.56H342.0M339.6 380.38H342.0M337.6 387.20H342.0" stroke="#747474" stroke-width="1.6" fill="none"/><text x="334.6" y="257.2" font-size="10" text-anchor="end" class="sm" >125.0</text><text x="334.6" y="284.5" font-size="10" text-anchor="end" class="sm" >75.0</text><text x="334.6" y="311.8" font-size="10" text-anchor="end" class="sm" >25.0</text><text x="334.6" y="339.0" font-size="10" text-anchor="end" class="sm" >-25.0</text><text x="334.6" y="366.3" font-size="10" text-anchor="end" class="sm" >-75.0</text><text x="334.6" y="393.6" font-size="10" text-anchor="end" class="sm" >-125.0</text><path d="M341.73 387.2v5.0M348.96 387.2v5.0M356.20 387.2v5.0M363.43 387.2v5.0M370.67 387.2v5.0M377.90 387.2v9.0M385.13 387.2v5.0M392.37 387.2v5.0M399.60 387.2v5.0M406.84 387.2v5.0M414.07 387.2v5.0M421.31 387.2v5.0M428.54 387.2v5.0M435.77 387.2v5.0M443.01 387.2v5.0M450.24 387.2v9.0M457.48 387.2v5.0M464.71 387.2v5.0M471.94 387.2v5.0M479.18 387.2v5.0M486.41 387.2v5.0M493.65 387.2v5.0M500.88 387.2v5.0M508.12 387.2v5.0M515.35 387.2v5.0M522.58 387.2v9.0M529.82 387.2v5.0M537.05 387.2v5.0M544.29 387.2v5.0M551.52 387.2v5.0M558.75 387.2v5.0M565.99 387.2v5.0M573.22 387.2v5.0M580.46 387.2v5.0M587.69 387.2v5.0M594.93 387.2v9.0M602.16 387.2v5.0M609.39 387.2v5.0M616.63 387.2v5.0M623.86 387.2v5.0M631.10 387.2v5.0M638.33 387.2v5.0M645.57 387.2v5.0M652.80 387.2v5.0M660.03 387.2v5.0M667.27 387.2v9.0M674.50 387.2v5.0M681.74 387.2v5.0M688.97 387.2v5.0M696.20 387.2v5.0M703.44 387.2v5.0M710.67 387.2v5.0M717.91 387.2v5.0M725.14 387.2v5.0M732.38 387.2v5.0M739.61 387.2v9.0M746.84 387.2v5.0M754.08 387.2v5.0M761.31 387.2v5.0M768.55 387.2v5.0M775.78 387.2v5.0M783.02 387.2v5.0M790.25 387.2v5.0M797.48 387.2v5.0M804.72 387.2v5.0M811.95 387.2v9.0M819.19 387.2v5.0M826.42 387.2v5.0M833.65 387.2v5.0M840.89 387.2v5.0M848.12 387.2v5.0M855.36 387.2v5.0M862.59 387.2v5.0M869.83 387.2v5.0M877.06 387.2v5.0M884.29 387.2v9.0M891.53 387.2v5.0M898.76 387.2v5.0M906.00 387.2v5.0M913.23 387.2v5.0M920.47 387.2v5.0M927.70 387.2v5.0M934.93 387.2v5.0M942.17 387.2v5.0M949.40 387.2v5.0M956.64 387.2v9.0M963.87 387.2v5.0M971.10 387.2v5.0M978.34 387.2v5.0M985.57 387.2v5.0M992.81 387.2v5.0M1000.04 387.2v5.0M1007.28 387.2v5.0M1014.51 387.2v5.0M1021.74 387.2v5.0M1028.98 387.2v9.0M1036.21 387.2v5.0M1043.45 387.2v5.0M1050.68 387.2v5.0M1057.91 387.2v5.0M1065.15 387.2v5.0M1072.38 387.2v5.0M1079.62 387.2v5.0M1086.85 387.2v5.0M1094.09 387.2v5.0M1101.32 387.2v9.0M1108.55 387.2v5.0M1115.79 387.2v5.0M1123.02 387.2v5.0M1130.26 387.2v5.0M1137.49 387.2v5.0M1144.73 387.2v5.0M1151.96 387.2v5.0M1159.19 387.2v5.0M1166.43 387.2v5.0M1173.66 387.2v9.0M1180.90 387.2v5.0M1188.13 387.2v5.0M1195.36 387.2v5.0M1202.60 387.2v5.0M1209.83 387.2v5.0M1217.07 387.2v5.0M1224.30 387.2v5.0M1231.54 387.2v5.0M1238.77 387.2v5.0M1246.00 387.2v9.0M1253.24 387.2v5.0M1260.47 387.2v5.0M1267.71 387.2v5.0M1274.94 387.2v5.0M1282.18 387.2v5.0M1289.41 387.2v5.0M1296.64 387.2v5.0M1303.88 387.2v5.0M1311.11 387.2v5.0M1318.35 387.2v9.0M1325.58 387.2v5.0M1332.81 387.2v5.0M1340.05 387.2v5.0M1347.28 387.2v5.0M1354.52 387.2v5.0M1361.75 387.2v5.0M1368.99 387.2v5.0M1376.22 387.2v5.0M1383.45 387.2v5.0M1390.69 387.2v9.0M1397.92 387.2v5.0M1405.16 387.2v5.0M1412.39 387.2v5.0M1419.62 387.2v5.0M1426.86 387.2v5.0M1434.09 387.2v5.0M1441.33 387.2v5.0M1448.56 387.2v5.0M1455.80 387.2v5.0M1463.03 387.2v9.0M1470.26 387.2v5.0M1477.50 387.2v5.0M1484.73 387.2v5.0M1491.97 387.2v5.0M1499.20 387.2v5.0M1506.44 387.2v5.0M1513.67 387.2v5.0M1520.90 387.2v5.0M1528.14 387.2v5.0M1535.37 387.2v9.0M1542.61 387.2v5.0M1549.84 387.2v5.0M1557.07 387.2v5.0M1564.31 387.2v5.0M1571.54 387.2v5.0M1578.78 387.2v5.0M1586.01 387.2v5.0M1593.25 387.2v5.0M1600.48 387.2v5.0M1607.71 387.2v9.0M1614.95 387.2v5.0M1622.18 387.2v5.0M1629.42 387.2v5.0M1636.65 387.2v5.0M1643.89 387.2v5.0" stroke="#747474" stroke-width="1.6" fill="none"/><text x="377.9" y="409.8" font-size="10" text-anchor="middle" class="sm" >03:47:40</text><text x="450.2" y="409.8" font-size="10" text-anchor="middle" class="sm" >03:47:50</text><text x="522.6" y="409.8" font-size="10" text-anchor="middle" class="sm" >03:48:00</text><text x="594.9" y="409.8" font-size="10" text-anchor="middle" class="sm" >03:48:10</text><text x="667.3" y="409.8" font-size="10" text-anchor="middle" class="sm" >03:48:20</text><text x="739.6" y="409.8" font-size="10" text-anchor="middle" class="sm" >03:48:30</text><text x="812.0" y="409.8" font-size="10" text-anchor="middle" class="sm" >03:48:40</text><text x="884.3" y="409.8" font-size="10" text-anchor="middle" class="sm" >03:48:50</text><text x="956.6" y="409.8" font-size="10" text-anchor="middle" class="sm" >03:49:00</text><text x="1029.0" y="409.8" font-size="10" text-anchor="middle" class="sm" >03:49:10</text><text x="1101.3" y="409.8" font-size="10" text-anchor="middle" class="sm" >03:49:20</text><text x="1173.7" y="409.8" font-size="10" text-anchor="middle" class="sm" >03:49:30</text><text x="1246.0" y="409.8" font-size="10" text-anchor="middle" class="sm" >03:49:40</text><text x="1318.3" y="409.8" font-size="10" text-anchor="middle" class="sm" >03:49:50</text><text x="1390.7" y="409.8" font-size="10" text-anchor="middle" class="sm" >03:50:00</text><text x="1463.0" y="409.8" font-size="10" text-anchor="middle" class="sm" >03:50:10</text><text x="1535.4" y="409.8" font-size="10" text-anchor="middle" class="sm" >03:50:20</text><text x="1607.7" y="409.8" font-size="10" text-anchor="middle" class="sm" >03:50:30</text><text transform="translate(274.4,320.5) rotate(-90)" font-size="14.9" font-weight="bold" text-anchor="middle" textLength="66.9" lengthAdjust="spacingAndGlyphs">Flow Rate</text><line x1="251.0" y1="415.0" x2="1659.0" y2="415.0" stroke="#c2c2c2" stroke-width="2" /><text x="345.2" y="427.7" font-size="10.15" class="sm" >Pressure: 4.62 EPAP: 4.02</text><text x="1601.8" y="427.5" font-size="10" class="sm" textLength="40.4" lengthAdjust="spacingAndGlyphs">Pressure</text><line x1="1582.8" y1="423.9" x2="1598.3" y2="423.9" stroke="#ff0000" stroke-width="2.1" /><text x="1555.8" y="427.5" font-size="10" class="sm" textLength="23.0" lengthAdjust="spacingAndGlyphs">EPAP</text><line x1="1536.8" y1="423.9" x2="1552.3" y2="423.9" stroke="#008000" stroke-width="2.1" /><line x1="342.0" y1="446.2" x2="1644.0" y2="446.2" stroke="#f8f8f8" stroke-width="1.3" /><line x1="342.0" y1="457.5" x2="1644.0" y2="457.5" stroke="#f8f8f8" stroke-width="1.3" /><line x1="342.0" y1="468.9" x2="1644.0" y2="468.9" stroke="#f8f8f8" stroke-width="1.3" /><line x1="342.0" y1="480.3" x2="1644.0" y2="480.3" stroke="#eeeeee" stroke-width="1.3" /><line x1="342.0" y1="491.6" x2="1644.0" y2="491.6" stroke="#f8f8f8" stroke-width="1.3" /><line x1="342.0" y1="503.0" x2="1644.0" y2="503.0" stroke="#f8f8f8" stroke-width="1.3" /><line x1="342.0" y1="514.4" x2="1644.0" y2="514.4" stroke="#f8f8f8" stroke-width="1.3" /><line x1="342.0" y1="525.7" x2="1644.0" y2="525.7" stroke="#eeeeee" stroke-width="1.3" /><line x1="342.0" y1="537.1" x2="1644.0" y2="537.1" stroke="#f8f8f8" stroke-width="1.3" /><line x1="342.0" y1="548.5" x2="1644.0" y2="548.5" stroke="#f8f8f8" stroke-width="1.3" /><line x1="342.0" y1="559.8" x2="1644.0" y2="559.8" stroke="#f8f8f8" stroke-width="1.3" /><path d="M337.6 434.80H342.0M339.6 446.17H342.0M339.6 457.53H342.0M339.6 468.90H342.0M337.6 480.27H342.0M339.6 491.63H342.0M339.6 503.00H342.0M339.6 514.37H342.0M337.6 525.73H342.0M339.6 537.10H342.0M339.6 548.47H342.0M339.6 559.83H342.0M337.6 571.20H342.0" stroke="#747474" stroke-width="1.6" fill="none"/><text x="334.6" y="441.2" font-size="10" text-anchor="end" class="sm" >10.0</text><text x="334.6" y="486.7" font-size="10" text-anchor="end" class="sm" >8.0</text><text x="334.6" y="532.1" font-size="10" text-anchor="end" class="sm" >6.0</text><text x="334.6" y="577.6" font-size="10" text-anchor="end" class="sm" >4.0</text><path d="M341.73 571.2v5.0M348.96 571.2v5.0M356.20 571.2v5.0M363.43 571.2v5.0M370.67 571.2v5.0M377.90 571.2v9.0M385.13 571.2v5.0M392.37 571.2v5.0M399.60 571.2v5.0M406.84 571.2v5.0M414.07 571.2v5.0M421.31 571.2v5.0M428.54 571.2v5.0M435.77 571.2v5.0M443.01 571.2v5.0M450.24 571.2v9.0M457.48 571.2v5.0M464.71 571.2v5.0M471.94 571.2v5.0M479.18 571.2v5.0M486.41 571.2v5.0M493.65 571.2v5.0M500.88 571.2v5.0M508.12 571.2v5.0M515.35 571.2v5.0M522.58 571.2v9.0M529.82 571.2v5.0M537.05 571.2v5.0M544.29 571.2v5.0M551.52 571.2v5.0M558.75 571.2v5.0M565.99 571.2v5.0M573.22 571.2v5.0M580.46 571.2v5.0M587.69 571.2v5.0M594.93 571.2v9.0M602.16 571.2v5.0M609.39 571.2v5.0M616.63 571.2v5.0M623.86 571.2v5.0M631.10 571.2v5.0M638.33 571.2v5.0M645.57 571.2v5.0M652.80 571.2v5.0M660.03 571.2v5.0M667.27 571.2v9.0M674.50 571.2v5.0M681.74 571.2v5.0M688.97 571.2v5.0M696.20 571.2v5.0M703.44 571.2v5.0M710.67 571.2v5.0M717.91 571.2v5.0M725.14 571.2v5.0M732.38 571.2v5.0M739.61 571.2v9.0M746.84 571.2v5.0M754.08 571.2v5.0M761.31 571.2v5.0M768.55 571.2v5.0M775.78 571.2v5.0M783.02 571.2v5.0M790.25 571.2v5.0M797.48 571.2v5.0M804.72 571.2v5.0M811.95 571.2v9.0M819.19 571.2v5.0M826.42 571.2v5.0M833.65 571.2v5.0M840.89 571.2v5.0M848.12 571.2v5.0M855.36 571.2v5.0M862.59 571.2v5.0M869.83 571.2v5.0M877.06 571.2v5.0M884.29 571.2v9.0M891.53 571.2v5.0M898.76 571.2v5.0M906.00 571.2v5.0M913.23 571.2v5.0M920.47 571.2v5.0M927.70 571.2v5.0M934.93 571.2v5.0M942.17 571.2v5.0M949.40 571.2v5.0M956.64 571.2v9.0M963.87 571.2v5.0M971.10 571.2v5.0M978.34 571.2v5.0M985.57 571.2v5.0M992.81 571.2v5.0M1000.04 571.2v5.0M1007.28 571.2v5.0M1014.51 571.2v5.0M1021.74 571.2v5.0M1028.98 571.2v9.0M1036.21 571.2v5.0M1043.45 571.2v5.0M1050.68 571.2v5.0M1057.91 571.2v5.0M1065.15 571.2v5.0M1072.38 571.2v5.0M1079.62 571.2v5.0M1086.85 571.2v5.0M1094.09 571.2v5.0M1101.32 571.2v9.0M1108.55 571.2v5.0M1115.79 571.2v5.0M1123.02 571.2v5.0M1130.26 571.2v5.0M1137.49 571.2v5.0M1144.73 571.2v5.0M1151.96 571.2v5.0M1159.19 571.2v5.0M1166.43 571.2v5.0M1173.66 571.2v9.0M1180.90 571.2v5.0M1188.13 571.2v5.0M1195.36 571.2v5.0M1202.60 571.2v5.0M1209.83 571.2v5.0M1217.07 571.2v5.0M1224.30 571.2v5.0M1231.54 571.2v5.0M1238.77 571.2v5.0M1246.00 571.2v9.0M1253.24 571.2v5.0M1260.47 571.2v5.0M1267.71 571.2v5.0M1274.94 571.2v5.0M1282.18 571.2v5.0M1289.41 571.2v5.0M1296.64 571.2v5.0M1303.88 571.2v5.0M1311.11 571.2v5.0M1318.35 571.2v9.0M1325.58 571.2v5.0M1332.81 571.2v5.0M1340.05 571.2v5.0M1347.28 571.2v5.0M1354.52 571.2v5.0M1361.75 571.2v5.0M1368.99 571.2v5.0M1376.22 571.2v5.0M1383.45 571.2v5.0M1390.69 571.2v9.0M1397.92 571.2v5.0M1405.16 571.2v5.0M1412.39 571.2v5.0M1419.62 571.2v5.0M1426.86 571.2v5.0M1434.09 571.2v5.0M1441.33 571.2v5.0M1448.56 571.2v5.0M1455.80 571.2v5.0M1463.03 571.2v9.0M1470.26 571.2v5.0M1477.50 571.2v5.0M1484.73 571.2v5.0M1491.97 571.2v5.0M1499.20 571.2v5.0M1506.44 571.2v5.0M1513.67 571.2v5.0M1520.90 571.2v5.0M1528.14 571.2v5.0M1535.37 571.2v9.0M1542.61 571.2v5.0M1549.84 571.2v5.0M1557.07 571.2v5.0M1564.31 571.2v5.0M1571.54 571.2v5.0M1578.78 571.2v5.0M1586.01 571.2v5.0M1593.25 571.2v5.0M1600.48 571.2v5.0M1607.71 571.2v9.0M1614.95 571.2v5.0M1622.18 571.2v5.0M1629.42 571.2v5.0M1636.65 571.2v5.0M1643.89 571.2v5.0" stroke="#747474" stroke-width="1.6" fill="none"/><text x="377.9" y="593.8" font-size="10" text-anchor="middle" class="sm" >03:47:40</text><text x="450.2" y="593.8" font-size="10" text-anchor="middle" class="sm" >03:47:50</text><text x="522.6" y="593.8" font-size="10" text-anchor="middle" class="sm" >03:48:00</text><text x="594.9" y="593.8" font-size="10" text-anchor="middle" class="sm" >03:48:10</text><text x="667.3" y="593.8" font-size="10" text-anchor="middle" class="sm" >03:48:20</text><text x="739.6" y="593.8" font-size="10" text-anchor="middle" class="sm" >03:48:30</text><text x="812.0" y="593.8" font-size="10" text-anchor="middle" class="sm" >03:48:40</text><text x="884.3" y="593.8" font-size="10" text-anchor="middle" class="sm" >03:48:50</text><text x="956.6" y="593.8" font-size="10" text-anchor="middle" class="sm" >03:49:00</text><text x="1029.0" y="593.8" font-size="10" text-anchor="middle" class="sm" >03:49:10</text><text x="1101.3" y="593.8" font-size="10" text-anchor="middle" class="sm" >03:49:20</text><text x="1173.7" y="593.8" font-size="10" text-anchor="middle" class="sm" >03:49:30</text><text x="1246.0" y="593.8" font-size="10" text-anchor="middle" class="sm" >03:49:40</text><text x="1318.3" y="593.8" font-size="10" text-anchor="middle" class="sm" >03:49:50</text><text x="1390.7" y="593.8" font-size="10" text-anchor="middle" class="sm" >03:50:00</text><text x="1463.0" y="593.8" font-size="10" text-anchor="middle" class="sm" >03:50:10</text><text x="1535.4" y="593.8" font-size="10" text-anchor="middle" class="sm" >03:50:20</text><text x="1607.7" y="593.8" font-size="10" text-anchor="middle" class="sm" >03:50:30</text><text transform="translate(274.4,504.5) rotate(-90)" font-size="14.9" font-weight="bold" text-anchor="middle" textLength="59.7" lengthAdjust="spacingAndGlyphs">Pressure</text><line x1="251.0" y1="599.0" x2="1659.0" y2="599.0" stroke="#c2c2c2" stroke-width="2" /><text x="345.2" y="611.7" font-size="10.15" class="sm" >Leak Rate: 2.40</text><text x="1598.3" y="611.5" font-size="10" class="sm" textLength="43.9" lengthAdjust="spacingAndGlyphs">Leak Rate</text><line x1="1579.3" y1="607.9" x2="1594.8" y2="607.9" stroke="#006400" stroke-width="2.1" /><line x1="342.0" y1="625.6" x2="1644.0" y2="625.6" stroke="#f8f8f8" stroke-width="1.3" /><line x1="342.0" y1="632.4" x2="1644.0" y2="632.4" stroke="#f8f8f8" stroke-width="1.3" /><line x1="342.0" y1="639.3" x2="1644.0" y2="639.3" stroke="#f8f8f8" stroke-width="1.3" /><line x1="342.0" y1="646.1" x2="1644.0" y2="646.1" stroke="#eeeeee" stroke-width="1.3" /><line x1="342.0" y1="652.9" x2="1644.0" y2="652.9" stroke="#f8f8f8" stroke-width="1.3" /><line x1="342.0" y1="659.7" x2="1644.0" y2="659.7" stroke="#f8f8f8" stroke-width="1.3" /><line x1="342.0" y1="666.5" x2="1644.0" y2="666.5" stroke="#f8f8f8" stroke-width="1.3" /><line x1="342.0" y1="673.4" x2="1644.0" y2="673.4" stroke="#eeeeee" stroke-width="1.3" /><line x1="342.0" y1="680.2" x2="1644.0" y2="680.2" stroke="#f8f8f8" stroke-width="1.3" /><line x1="342.0" y1="687.0" x2="1644.0" y2="687.0" stroke="#f8f8f8" stroke-width="1.3" /><line x1="342.0" y1="693.8" x2="1644.0" y2="693.8" stroke="#f8f8f8" stroke-width="1.3" /><line x1="342.0" y1="700.6" x2="1644.0" y2="700.6" stroke="#eeeeee" stroke-width="1.3" /><line x1="342.0" y1="707.5" x2="1644.0" y2="707.5" stroke="#f8f8f8" stroke-width="1.3" /><line x1="342.0" y1="714.3" x2="1644.0" y2="714.3" stroke="#f8f8f8" stroke-width="1.3" /><line x1="342.0" y1="721.1" x2="1644.0" y2="721.1" stroke="#f8f8f8" stroke-width="1.3" /><line x1="342.0" y1="727.9" x2="1644.0" y2="727.9" stroke="#eeeeee" stroke-width="1.3" /><line x1="342.0" y1="734.7" x2="1644.0" y2="734.7" stroke="#f8f8f8" stroke-width="1.3" /><line x1="342.0" y1="741.6" x2="1644.0" y2="741.6" stroke="#f8f8f8" stroke-width="1.3" /><line x1="342.0" y1="748.4" x2="1644.0" y2="748.4" stroke="#f8f8f8" stroke-width="1.3" /><path d="M337.6 618.80H342.0M339.6 624.26H342.0M339.6 629.71H342.0M339.6 635.17H342.0M339.6 640.62H342.0M337.6 646.08H342.0M339.6 651.54H342.0M339.6 656.99H342.0M339.6 662.45H342.0M339.6 667.90H342.0M337.6 673.36H342.0M339.6 678.82H342.0M339.6 684.27H342.0M339.6 689.73H342.0M339.6 695.18H342.0M337.6 700.64H342.0M339.6 706.10H342.0M339.6 711.55H342.0M339.6 717.01H342.0M339.6 722.46H342.0M337.6 727.92H342.0M339.6 733.38H342.0M339.6 738.83H342.0M339.6 744.29H342.0M339.6 749.74H342.0M337.6 755.20H342.0" stroke="#747474" stroke-width="1.6" fill="none"/><text x="334.6" y="625.2" font-size="10" text-anchor="end" class="sm" >50.0</text><text x="334.6" y="652.5" font-size="10" text-anchor="end" class="sm" >40.0</text><text x="334.6" y="679.8" font-size="10" text-anchor="end" class="sm" >30.0</text><text x="334.6" y="707.0" font-size="10" text-anchor="end" class="sm" >20.0</text><text x="334.6" y="734.3" font-size="10" text-anchor="end" class="sm" >10.0</text><text x="334.6" y="761.6" font-size="10" text-anchor="end" class="sm" >0.0</text><path d="M341.73 755.2v5.0M348.96 755.2v5.0M356.20 755.2v5.0M363.43 755.2v5.0M370.67 755.2v5.0M377.90 755.2v9.0M385.13 755.2v5.0M392.37 755.2v5.0M399.60 755.2v5.0M406.84 755.2v5.0M414.07 755.2v5.0M421.31 755.2v5.0M428.54 755.2v5.0M435.77 755.2v5.0M443.01 755.2v5.0M450.24 755.2v9.0M457.48 755.2v5.0M464.71 755.2v5.0M471.94 755.2v5.0M479.18 755.2v5.0M486.41 755.2v5.0M493.65 755.2v5.0M500.88 755.2v5.0M508.12 755.2v5.0M515.35 755.2v5.0M522.58 755.2v9.0M529.82 755.2v5.0M537.05 755.2v5.0M544.29 755.2v5.0M551.52 755.2v5.0M558.75 755.2v5.0M565.99 755.2v5.0M573.22 755.2v5.0M580.46 755.2v5.0M587.69 755.2v5.0M594.93 755.2v9.0M602.16 755.2v5.0M609.39 755.2v5.0M616.63 755.2v5.0M623.86 755.2v5.0M631.10 755.2v5.0M638.33 755.2v5.0M645.57 755.2v5.0M652.80 755.2v5.0M660.03 755.2v5.0M667.27 755.2v9.0M674.50 755.2v5.0M681.74 755.2v5.0M688.97 755.2v5.0M696.20 755.2v5.0M703.44 755.2v5.0M710.67 755.2v5.0M717.91 755.2v5.0M725.14 755.2v5.0M732.38 755.2v5.0M739.61 755.2v9.0M746.84 755.2v5.0M754.08 755.2v5.0M761.31 755.2v5.0M768.55 755.2v5.0M775.78 755.2v5.0M783.02 755.2v5.0M790.25 755.2v5.0M797.48 755.2v5.0M804.72 755.2v5.0M811.95 755.2v9.0M819.19 755.2v5.0M826.42 755.2v5.0M833.65 755.2v5.0M840.89 755.2v5.0M848.12 755.2v5.0M855.36 755.2v5.0M862.59 755.2v5.0M869.83 755.2v5.0M877.06 755.2v5.0M884.29 755.2v9.0M891.53 755.2v5.0M898.76 755.2v5.0M906.00 755.2v5.0M913.23 755.2v5.0M920.47 755.2v5.0M927.70 755.2v5.0M934.93 755.2v5.0M942.17 755.2v5.0M949.40 755.2v5.0M956.64 755.2v9.0M963.87 755.2v5.0M971.10 755.2v5.0M978.34 755.2v5.0M985.57 755.2v5.0M992.81 755.2v5.0M1000.04 755.2v5.0M1007.28 755.2v5.0M1014.51 755.2v5.0M1021.74 755.2v5.0M1028.98 755.2v9.0M1036.21 755.2v5.0M1043.45 755.2v5.0M1050.68 755.2v5.0M1057.91 755.2v5.0M1065.15 755.2v5.0M1072.38 755.2v5.0M1079.62 755.2v5.0M1086.85 755.2v5.0M1094.09 755.2v5.0M1101.32 755.2v9.0M1108.55 755.2v5.0M1115.79 755.2v5.0M1123.02 755.2v5.0M1130.26 755.2v5.0M1137.49 755.2v5.0M1144.73 755.2v5.0M1151.96 755.2v5.0M1159.19 755.2v5.0M1166.43 755.2v5.0M1173.66 755.2v9.0M1180.90 755.2v5.0M1188.13 755.2v5.0M1195.36 755.2v5.0M1202.60 755.2v5.0M1209.83 755.2v5.0M1217.07 755.2v5.0M1224.30 755.2v5.0M1231.54 755.2v5.0M1238.77 755.2v5.0M1246.00 755.2v9.0M1253.24 755.2v5.0M1260.47 755.2v5.0M1267.71 755.2v5.0M1274.94 755.2v5.0M1282.18 755.2v5.0M1289.41 755.2v5.0M1296.64 755.2v5.0M1303.88 755.2v5.0M1311.11 755.2v5.0M1318.35 755.2v9.0M1325.58 755.2v5.0M1332.81 755.2v5.0M1340.05 755.2v5.0M1347.28 755.2v5.0M1354.52 755.2v5.0M1361.75 755.2v5.0M1368.99 755.2v5.0M1376.22 755.2v5.0M1383.45 755.2v5.0M1390.69 755.2v9.0M1397.92 755.2v5.0M1405.16 755.2v5.0M1412.39 755.2v5.0M1419.62 755.2v5.0M1426.86 755.2v5.0M1434.09 755.2v5.0M1441.33 755.2v5.0M1448.56 755.2v5.0M1455.80 755.2v5.0M1463.03 755.2v9.0M1470.26 755.2v5.0M1477.50 755.2v5.0M1484.73 755.2v5.0M1491.97 755.2v5.0M1499.20 755.2v5.0M1506.44 755.2v5.0M1513.67 755.2v5.0M1520.90 755.2v5.0M1528.14 755.2v5.0M1535.37 755.2v9.0M1542.61 755.2v5.0M1549.84 755.2v5.0M1557.07 755.2v5.0M1564.31 755.2v5.0M1571.54 755.2v5.0M1578.78 755.2v5.0M1586.01 755.2v5.0M1593.25 755.2v5.0M1600.48 755.2v5.0M1607.71 755.2v9.0M1614.95 755.2v5.0M1622.18 755.2v5.0M1629.42 755.2v5.0M1636.65 755.2v5.0M1643.89 755.2v5.0" stroke="#747474" stroke-width="1.6" fill="none"/><text x="377.9" y="777.8" font-size="10" text-anchor="middle" class="sm" >03:47:40</text><text x="450.2" y="777.8" font-size="10" text-anchor="middle" class="sm" >03:47:50</text><text x="522.6" y="777.8" font-size="10" text-anchor="middle" class="sm" >03:48:00</text><text x="594.9" y="777.8" font-size="10" text-anchor="middle" class="sm" >03:48:10</text><text x="667.3" y="777.8" font-size="10" text-anchor="middle" class="sm" >03:48:20</text><text x="739.6" y="777.8" font-size="10" text-anchor="middle" class="sm" >03:48:30</text><text x="812.0" y="777.8" font-size="10" text-anchor="middle" class="sm" >03:48:40</text><text x="884.3" y="777.8" font-size="10" text-anchor="middle" class="sm" >03:48:50</text><text x="956.6" y="777.8" font-size="10" text-anchor="middle" class="sm" >03:49:00</text><text x="1029.0" y="777.8" font-size="10" text-anchor="middle" class="sm" >03:49:10</text><text x="1101.3" y="777.8" font-size="10" text-anchor="middle" class="sm" >03:49:20</text><text x="1173.7" y="777.8" font-size="10" text-anchor="middle" class="sm" >03:49:30</text><text x="1246.0" y="777.8" font-size="10" text-anchor="middle" class="sm" >03:49:40</text><text x="1318.3" y="777.8" font-size="10" text-anchor="middle" class="sm" >03:49:50</text><text x="1390.7" y="777.8" font-size="10" text-anchor="middle" class="sm" >03:50:00</text><text x="1463.0" y="777.8" font-size="10" text-anchor="middle" class="sm" >03:50:10</text><text x="1535.4" y="777.8" font-size="10" text-anchor="middle" class="sm" >03:50:20</text><text x="1607.7" y="777.8" font-size="10" text-anchor="middle" class="sm" >03:50:30</text><text transform="translate(274.4,688.5) rotate(-90)" font-size="14.9" font-weight="bold" text-anchor="middle" textLength="67.3" lengthAdjust="spacingAndGlyphs">Leak Rate</text><line x1="251.0" y1="783.0" x2="1659.0" y2="783.0" stroke="#c2c2c2" stroke-width="2" /><text x="345.2" y="795.7" font-size="10.15" class="sm" >Flow Limit.: 0.00</text><text x="1593.7" y="795.5" font-size="10" class="sm" textLength="48.5" lengthAdjust="spacingAndGlyphs">Flow Limit.</text><line x1="1574.7" y1="791.9" x2="1590.2" y2="791.9" stroke="#a8a8a8" stroke-width="2.1" /><line x1="342.0" y1="836.9" x2="1644.0" y2="836.9" stroke="#f8f8f8" stroke-width="1.3" /><line x1="342.0" y1="871.0" x2="1644.0" y2="871.0" stroke="#f8f8f8" stroke-width="1.3" /><line x1="342.0" y1="905.1" x2="1644.0" y2="905.1" stroke="#f8f8f8" stroke-width="1.3" /><path d="M337.6 802.80H342.0M339.6 808.26H342.0M339.6 813.71H342.0M339.6 819.17H342.0M339.6 824.62H342.0M337.6 830.08H342.0M339.6 835.54H342.0M339.6 840.99H342.0M339.6 846.45H342.0M339.6 851.90H342.0M337.6 857.36H342.0M339.6 862.82H342.0M339.6 868.27H342.0M339.6 873.73H342.0M339.6 879.18H342.0M337.6 884.64H342.0M339.6 890.10H342.0M339.6 895.55H342.0M339.6 901.01H342.0M339.6 906.46H342.0M337.6 911.92H342.0M339.6 917.38H342.0M339.6 922.83H342.0M339.6 928.29H342.0M339.6 933.74H342.0M337.6 939.20H342.0" stroke="#747474" stroke-width="1.6" fill="none"/><text x="334.6" y="809.2" font-size="10" text-anchor="end" class="sm" >1.00</text><text x="334.6" y="836.5" font-size="10" text-anchor="end" class="sm" >0.80</text><text x="334.6" y="863.8" font-size="10" text-anchor="end" class="sm" >0.60</text><text x="334.6" y="891.0" font-size="10" text-anchor="end" class="sm" >0.40</text><text x="334.6" y="918.3" font-size="10" text-anchor="end" class="sm" >0.20</text><text x="334.6" y="945.6" font-size="10" text-anchor="end" class="sm" >0.00</text><path d="M341.73 939.2v5.0M348.96 939.2v5.0M356.20 939.2v5.0M363.43 939.2v5.0M370.67 939.2v5.0M377.90 939.2v9.0M385.13 939.2v5.0M392.37 939.2v5.0M399.60 939.2v5.0M406.84 939.2v5.0M414.07 939.2v5.0M421.31 939.2v5.0M428.54 939.2v5.0M435.77 939.2v5.0M443.01 939.2v5.0M450.24 939.2v9.0M457.48 939.2v5.0M464.71 939.2v5.0M471.94 939.2v5.0M479.18 939.2v5.0M486.41 939.2v5.0M493.65 939.2v5.0M500.88 939.2v5.0M508.12 939.2v5.0M515.35 939.2v5.0M522.58 939.2v9.0M529.82 939.2v5.0M537.05 939.2v5.0M544.29 939.2v5.0M551.52 939.2v5.0M558.75 939.2v5.0M565.99 939.2v5.0M573.22 939.2v5.0M580.46 939.2v5.0M587.69 939.2v5.0M594.93 939.2v9.0M602.16 939.2v5.0M609.39 939.2v5.0M616.63 939.2v5.0M623.86 939.2v5.0M631.10 939.2v5.0M638.33 939.2v5.0M645.57 939.2v5.0M652.80 939.2v5.0M660.03 939.2v5.0M667.27 939.2v9.0M674.50 939.2v5.0M681.74 939.2v5.0M688.97 939.2v5.0M696.20 939.2v5.0M703.44 939.2v5.0M710.67 939.2v5.0M717.91 939.2v5.0M725.14 939.2v5.0M732.38 939.2v5.0M739.61 939.2v9.0M746.84 939.2v5.0M754.08 939.2v5.0M761.31 939.2v5.0M768.55 939.2v5.0M775.78 939.2v5.0M783.02 939.2v5.0M790.25 939.2v5.0M797.48 939.2v5.0M804.72 939.2v5.0M811.95 939.2v9.0M819.19 939.2v5.0M826.42 939.2v5.0M833.65 939.2v5.0M840.89 939.2v5.0M848.12 939.2v5.0M855.36 939.2v5.0M862.59 939.2v5.0M869.83 939.2v5.0M877.06 939.2v5.0M884.29 939.2v9.0M891.53 939.2v5.0M898.76 939.2v5.0M906.00 939.2v5.0M913.23 939.2v5.0M920.47 939.2v5.0M927.70 939.2v5.0M934.93 939.2v5.0M942.17 939.2v5.0M949.40 939.2v5.0M956.64 939.2v9.0M963.87 939.2v5.0M971.10 939.2v5.0M978.34 939.2v5.0M985.57 939.2v5.0M992.81 939.2v5.0M1000.04 939.2v5.0M1007.28 939.2v5.0M1014.51 939.2v5.0M1021.74 939.2v5.0M1028.98 939.2v9.0M1036.21 939.2v5.0M1043.45 939.2v5.0M1050.68 939.2v5.0M1057.91 939.2v5.0M1065.15 939.2v5.0M1072.38 939.2v5.0M1079.62 939.2v5.0M1086.85 939.2v5.0M1094.09 939.2v5.0M1101.32 939.2v9.0M1108.55 939.2v5.0M1115.79 939.2v5.0M1123.02 939.2v5.0M1130.26 939.2v5.0M1137.49 939.2v5.0M1144.73 939.2v5.0M1151.96 939.2v5.0M1159.19 939.2v5.0M1166.43 939.2v5.0M1173.66 939.2v9.0M1180.90 939.2v5.0M1188.13 939.2v5.0M1195.36 939.2v5.0M1202.60 939.2v5.0M1209.83 939.2v5.0M1217.07 939.2v5.0M1224.30 939.2v5.0M1231.54 939.2v5.0M1238.77 939.2v5.0M1246.00 939.2v9.0M1253.24 939.2v5.0M1260.47 939.2v5.0M1267.71 939.2v5.0M1274.94 939.2v5.0M1282.18 939.2v5.0M1289.41 939.2v5.0M1296.64 939.2v5.0M1303.88 939.2v5.0M1311.11 939.2v5.0M1318.35 939.2v9.0M1325.58 939.2v5.0M1332.81 939.2v5.0M1340.05 939.2v5.0M1347.28 939.2v5.0M1354.52 939.2v5.0M1361.75 939.2v5.0M1368.99 939.2v5.0M1376.22 939.2v5.0M1383.45 939.2v5.0M1390.69 939.2v9.0M1397.92 939.2v5.0M1405.16 939.2v5.0M1412.39 939.2v5.0M1419.62 939.2v5.0M1426.86 939.2v5.0M1434.09 939.2v5.0M1441.33 939.2v5.0M1448.56 939.2v5.0M1455.80 939.2v5.0M1463.03 939.2v9.0M1470.26 939.2v5.0M1477.50 939.2v5.0M1484.73 939.2v5.0M1491.97 939.2v5.0M1499.20 939.2v5.0M1506.44 939.2v5.0M1513.67 939.2v5.0M1520.90 939.2v5.0M1528.14 939.2v5.0M1535.37 939.2v9.0M1542.61 939.2v5.0M1549.84 939.2v5.0M1557.07 939.2v5.0M1564.31 939.2v5.0M1571.54 939.2v5.0M1578.78 939.2v5.0M1586.01 939.2v5.0M1593.25 939.2v5.0M1600.48 939.2v5.0M1607.71 939.2v9.0M1614.95 939.2v5.0M1622.18 939.2v5.0M1629.42 939.2v5.0M1636.65 939.2v5.0M1643.89 939.2v5.0" stroke="#747474" stroke-width="1.6" fill="none"/><text x="377.9" y="961.8" font-size="10" text-anchor="middle" class="sm" >03:47:40</text><text x="450.2" y="961.8" font-size="10" text-anchor="middle" class="sm" >03:47:50</text><text x="522.6" y="961.8" font-size="10" text-anchor="middle" class="sm" >03:48:00</text><text x="594.9" y="961.8" font-size="10" text-anchor="middle" class="sm" >03:48:10</text><text x="667.3" y="961.8" font-size="10" text-anchor="middle" class="sm" >03:48:20</text><text x="739.6" y="961.8" font-size="10" text-anchor="middle" class="sm" >03:48:30</text><text x="812.0" y="961.8" font-size="10" text-anchor="middle" class="sm" >03:48:40</text><text x="884.3" y="961.8" font-size="10" text-anchor="middle" class="sm" >03:48:50</text><text x="956.6" y="961.8" font-size="10" text-anchor="middle" class="sm" >03:49:00</text><text x="1029.0" y="961.8" font-size="10" text-anchor="middle" class="sm" >03:49:10</text><text x="1101.3" y="961.8" font-size="10" text-anchor="middle" class="sm" >03:49:20</text><text x="1173.7" y="961.8" font-size="10" text-anchor="middle" class="sm" >03:49:30</text><text x="1246.0" y="961.8" font-size="10" text-anchor="middle" class="sm" >03:49:40</text><text x="1318.3" y="961.8" font-size="10" text-anchor="middle" class="sm" >03:49:50</text><text x="1390.7" y="961.8" font-size="10" text-anchor="middle" class="sm" >03:50:00</text><text x="1463.0" y="961.8" font-size="10" text-anchor="middle" class="sm" >03:50:10</text><text x="1535.4" y="961.8" font-size="10" text-anchor="middle" class="sm" >03:50:20</text><text x="1607.7" y="961.8" font-size="10" text-anchor="middle" class="sm" >03:50:30</text><text transform="translate(274.4,872.5) rotate(-90)" font-size="14.9" font-weight="bold" text-anchor="middle" textLength="75.3" lengthAdjust="spacingAndGlyphs">Flow Limit.</text><line x1="251.0" y1="967.0" x2="1659.0" y2="967.0" stroke="#c2c2c2" stroke-width="2" /><text x="345.2" y="979.7" font-size="10.15" class="sm" >Mask Pressure: 4.07</text><text x="1575.2" y="979.5" font-size="10" class="sm" textLength="67.0" lengthAdjust="spacingAndGlyphs">Mask Pressure</text><line x1="1556.2" y1="975.9" x2="1571.7" y2="975.9" stroke="#0000ff" stroke-width="2.1" /><path d="M344.0 320.4 L346.1 321.0 L348.1 319.8 L350.1 321.2 L353.2 318.8 L356.2 309.7 L358.2 305.8 L360.2 302.2 L362.3 303.6 L364.3 332.6 L366.3 330.9 L368.3 328.8 L370.4 326.9 L372.7 324.6 L375.1 322.6 L377.4 319.8 L380.5 320.8 L383.5 316.8 L386.5 309.7 L388.6 307.9 L390.6 306.3 L392.2 307.7 L394.6 328.5 L396.7 327.4 L398.7 326.1 L400.7 324.9 L402.7 323.7 L404.8 321.2 L406.8 318.8 L409.8 320.8 L411.8 319.8 L413.9 317.2 L416.9 320.4 L419.9 314.8 L422.0 310.3 L424.5 310.4 L427.0 308.7 L430.1 326.9 L432.4 325.1 L434.8 324.3 L437.1 322.9 L439.7 321.7 L442.2 318.8 L445.2 321.2 L447.3 320.2 L449.3 317.8 L452.3 319.8 L454.3 310.3 L456.6 308.8 L458.8 308.1 L461.0 308.1 L464.5 328.5 L466.8 327.3 L469.2 325.5 L471.6 325.3 L473.6 322.0 L475.6 319.8 L477.6 319.7 L479.6 321.2 L481.7 319.4 L483.7 317.5 L485.7 314.8 L488.8 304.6 L491.8 306.3 L493.6 318.7 L495.4 329.5 L497.6 327.6 L499.8 327.5 L501.9 325.9 L503.9 324.2 L506.0 321.1 L508.0 319.8 L511.0 320.8 L514.1 308.7 L516.3 306.9 L518.5 304.5 L520.7 301.0 L523.8 337.6 L525.9 334.8 L528.1 334.1 L530.2 331.0 L532.3 328.1 L534.3 325.5 L536.3 322.9 L539.4 320.8 L541.4 314.2 L543.4 305.7 L545.8 302.1 L548.1 296.5 L550.5 292.9 L552.1 295.5 L554.5 343.5 L556.6 339.9 L558.6 336.5 L560.6 333.0 L563.0 328.6 L565.3 324.3 L567.7 320.8 L570.7 322.9 L572.7 314.4 L574.8 306.7 L576.9 303.9 L579.1 299.4 L581.2 297.2 L583.3 318.2 L585.3 339.1 L587.2 336.9 L589.1 334.0 L591.1 332.6 L593.0 331.0 L595.0 328.4 L597.0 325.4 L599.1 321.7 L601.1 319.8 L603.1 321.3 L605.1 320.8 L607.2 307.1 L609.5 306.2 L611.9 305.0 L614.2 302.6 L617.7 333.4 L619.6 331.1 L621.5 329.9 L623.3 328.9 L625.4 325.6 L627.4 324.8 L629.4 321.8 L631.4 321.1 L633.5 320.4 L635.5 320.8 L638.0 317.1 L640.5 313.8 L642.9 311.7 L645.3 308.6 L647.6 305.0 L649.7 307.7 L652.7 331.0 L655.1 329.1 L657.4 327.6 L659.8 326.9 L661.8 325.2 L663.8 321.8 L665.8 321.0 L667.9 320.2 L669.9 318.8 L670.0 318.8 L672.0 311.9 L673.9 306.7 L674.0 306.7 L677.0 305.0 L679.1 305.0 L680.5 306.7 L683.2 333.0 L685.2 329.6 L687.2 327.9 L689.6 326.1 L691.9 323.3 L694.3 321.2 L696.3 320.4 L698.3 321.2 L700.9 319.4 L703.4 315.8 L705.9 311.5 L708.5 306.7 L711.5 304.6 L713.5 306.7 L716.1 333.4 L718.0 331.8 L719.8 328.2 L721.6 326.9 L724.0 325.6 L726.3 322.0 L728.7 320.8 L730.7 321.8 L732.7 321.2 L735.8 314.8 L738.3 301.5 L740.8 288.5 L742.9 287.4 L744.9 293.9 L746.9 301.0 L749.9 292.9 L752.0 293.2 L754.0 294.2 L756.0 293.5 L759.1 298.6 L762.1 337.0 L763.5 326.9 L766.1 340.7 L768.7 337.4 L771.2 335.0 L773.2 331.2 L775.2 328.9 L777.8 325.1 L780.3 321.2 L783.3 329.9 L785.4 328.9 L787.4 328.2 L789.4 327.7 L791.4 327.9 L793.5 325.5 L795.5 324.3 L797.5 323.0 L799.5 321.8 L801.6 320.4 L803.6 320.3 L805.6 318.8 L807.2 327.9 L809.4 320.9 L811.7 314.8 L813.7 315.3 L815.7 315.8 L818.8 318.8 L821.8 312.7 L823.8 289.3 L825.8 267.2 L828.9 265.8 L831.9 270.2 L833.9 280.1 L836.0 290.5 L838.0 309.8 L840.0 330.5 L842.0 351.2 L844.1 345.5 L846.1 342.2 L848.1 337.0 L850.1 330.0 L852.1 322.9 L854.2 320.2 L856.2 318.8 L858.2 316.8 L860.2 316.0 L862.3 312.6 L864.3 311.7 L866.3 313.9 L868.3 314.8 L870.4 314.6 L872.4 314.8 L874.4 315.8 L876.4 316.8 L878.5 316.8 L880.5 315.2 L882.5 314.8 L884.5 315.1 L886.6 315.8 L888.6 315.8 L890.6 317.8 L892.6 317.8 L893.9 319.4 L895.0 316.7 L896.1 319.8 L897.4 315.8 L898.8 319.0 L900.2 315.8 L901.2 319.6 L902.9 315.9 L904.1 319.9 L905.8 316.6 L907.1 320.5 L908.2 317.1 L909.4 319.1 L910.5 316.2 L912.2 319.2 L913.6 316.7 L914.9 319.8 L916.0 315.8 L917.1 320.0 L918.5 316.2 L919.9 319.6 L921.2 317.0 L922.7 319.3 L924.2 316.5 L925.9 320.1 L927.1 317.3 L928.2 319.6 L929.8 315.9 L931.2 319.0 L932.8 316.9 L934.2 320.3 L935.5 316.8 L936.9 319.8 L938.3 317.0 L940.1 319.7 L941.6 315.8 L943.2 319.9 L945.0 317.0 L946.2 319.5 L947.7 315.7 L949.1 319.2 L950.2 315.8 L951.8 319.1 L953.0 316.3 L954.7 319.0 L956.0 316.6 L957.8 320.2 L959.4 316.1 L960.8 319.5 L962.5 317.2 L963.6 319.2 L964.8 316.1 L966.2 319.8 L967.4 315.7 L968.7 319.5 L970.2 317.2 L971.7 319.7 L973.2 316.8 L974.3 320.3 L975.9 317.1 L977.5 319.5 L978.8 315.9 L980.4 319.0 L981.7 316.8 L983.7 312.4 L985.7 308.7 L987.3 310.7 L989.4 324.9 L991.6 323.5 L993.8 320.8 L996.2 320.9 L998.5 320.4 L1000.9 319.8 L1003.9 314.8 L1006.0 305.1 L1008.0 295.6 L1010.0 286.4 L1013.0 280.8 L1015.1 285.4 L1017.1 351.2 L1019.1 344.2 L1021.1 338.3 L1023.2 333.0 L1025.0 329.7 L1026.8 328.6 L1028.6 325.2 L1030.4 322.6 L1032.3 320.8 L1034.3 318.8 L1037.3 290.5 L1039.3 286.8 L1041.4 284.8 L1044.4 290.5 L1046.8 351.2 L1049.1 345.8 L1051.3 339.8 L1053.5 333.0 L1055.9 330.1 L1058.2 326.1 L1060.6 323.3 L1063.1 322.0 L1065.7 321.8 L1067.7 314.9 L1069.7 308.7 L1072.7 290.9 L1074.8 291.6 L1076.8 292.5 L1079.8 304.6 L1080.8 340.7 L1082.9 337.4 L1084.9 335.4 L1086.9 333.0 L1088.9 330.1 L1091.0 329.0 L1093.0 326.6 L1095.0 323.3 L1098.0 321.8 L1101.1 297.6 L1104.1 300.6 L1106.1 320.8 L1108.7 318.4 L1111.2 315.8 L1112.2 339.1 L1114.2 331.0 L1116.3 328.4 L1118.3 327.8 L1120.3 324.9 L1123.3 322.5 L1125.4 321.1 L1127.4 320.1 L1129.4 318.4 L1131.4 318.4 L1133.5 321.8 L1135.5 319.9 L1137.5 318.4 L1139.5 316.8 L1142.6 318.8 L1145.1 310.2 L1147.6 301.6 L1149.6 304.6 L1152.7 332.0 L1154.5 329.3 L1156.4 327.9 L1158.2 324.9 L1160.1 323.4 L1162.0 321.0 L1163.8 319.8 L1165.1 321.3 L1166.2 318.3 L1167.3 320.9 L1168.4 317.9 L1169.7 321.0 L1171.4 318.7 L1172.5 321.3 L1173.8 318.3 L1174.9 322.3 L1176.7 318.5 L1178.1 321.1 L1179.2 318.3 L1180.4 322.3 L1181.5 317.8 L1183.3 321.8 L1184.4 318.6 L1185.4 321.8 L1187.2 319.1 L1188.7 321.3 L1190.0 318.0 L1191.6 321.8 L1193.3 318.3 L1194.4 322.2 L1196.2 319.1 L1197.9 322.2 L1199.5 318.1 L1200.9 321.5 L1201.9 317.8 L1203.1 321.3 L1204.7 319.3 L1206.0 322.4 L1207.8 319.3 L1209.1 321.3 L1210.3 318.0 L1211.5 321.9 L1213.2 319.1 L1214.6 322.0 L1216.2 317.9 L1217.7 322.4 L1219.4 318.9 L1220.8 321.2 L1222.5 318.8 L1225.0 315.6 L1227.6 312.7 L1229.6 306.8 L1231.6 302.6 L1233.6 315.8 L1235.7 331.0 L1237.5 328.3 L1239.3 326.0 L1241.1 324.4 L1242.9 322.1 L1244.8 319.8 L1246.8 320.5 L1248.8 320.4 L1250.8 320.7 L1252.9 320.4 L1255.9 319.8 L1257.9 319.2 L1259.9 316.9 L1262.0 315.8 L1264.0 308.2 L1266.0 302.3 L1268.0 294.1 L1270.1 296.5 L1273.1 328.9 L1275.1 329.7 L1277.2 332.0 L1279.2 330.6 L1281.2 328.7 L1283.2 325.7 L1285.2 324.9 L1287.3 323.0 L1289.3 319.8 L1291.3 311.0 L1293.3 300.6 L1295.4 296.6 L1297.4 292.1 L1300.4 295.5 L1302.5 317.8 L1304.5 339.1 L1306.8 337.0 L1309.2 332.9 L1311.6 331.0 L1313.6 329.1 L1315.6 327.2 L1317.6 325.3 L1320.7 319.8 L1323.2 309.9 L1325.7 298.6 L1328.8 297.0 L1330.8 318.1 L1332.8 338.0 L1334.8 338.0 L1336.9 336.6 L1339.2 333.6 L1341.6 330.9 L1343.9 326.9 L1346.5 324.7 L1348.6 323.9 L1350.8 322.7 L1352.9 321.0 L1355.7 322.0 L1357.5 320.0 L1359.4 319.2 L1361.2 315.0 L1363.1 312.7 L1365.2 307.6 L1367.3 303.9 L1368.6 305.4 L1371.4 330.3 L1373.2 328.1 L1375.1 325.8 L1376.9 324.7 L1378.8 323.7 L1380.6 321.5 L1382.4 319.8 L1385.2 321.0 L1387.5 319.7 L1389.8 317.9 L1392.6 320.1 L1394.9 319.3 L1397.2 317.9 L1399.1 319.2 L1400.9 319.8 L1402.7 318.5 L1404.6 317.4 L1406.9 317.3 L1409.2 319.2 L1410.5 320.8 L1412.1 318.7 L1413.5 320.9 L1415.2 318.3 L1416.4 320.5 L1417.5 318.5 L1419.1 320.5 L1420.8 318.7 L1422.3 320.9 L1423.7 317.3 L1424.8 321.9 L1426.3 317.9 L1428.0 321.0 L1429.7 318.4 L1430.9 320.7 L1432.1 317.5 L1433.6 320.7 L1434.9 317.3 L1436.7 320.9 L1438.0 318.0 L1439.7 321.0 L1441.5 317.9 L1442.9 321.1 L1443.9 317.8 L1445.1 320.3 L1446.7 317.4 L1448.1 321.5 L1449.5 317.6 L1450.9 321.2 L1452.6 317.3 L1454.0 320.7 L1455.2 318.3 L1456.6 321.2 L1458.1 318.3 L1459.9 313.3 L1461.8 307.2 L1463.6 304.5 L1465.5 300.7 L1467.3 298.9 L1469.2 297.1 L1471.4 336.7 L1473.6 333.6 L1475.8 330.6 L1478.0 326.2 L1480.2 323.8 L1482.1 323.4 L1483.9 321.5 L1485.8 320.2 L1487.6 320.1 L1489.5 316.9 L1491.3 314.6 L1494.1 299.8 L1496.9 293.4 L1498.7 292.4 L1500.5 290.6 L1503.3 346.0 L1505.5 341.7 L1507.6 339.1 L1509.8 334.9 L1511.6 333.1 L1513.5 329.3 L1515.3 326.3 L1517.2 323.8 L1519.9 322.0 L1522.7 307.2 L1525.5 299.8 L1527.8 298.7 L1530.1 297.6 L1531.9 319.4 L1533.8 340.4 L1535.6 338.6 L1537.5 336.0 L1539.3 333.8 L1541.1 331.2 L1543.0 328.0 L1544.8 325.9 L1546.7 323.8 L1548.5 322.0 L1550.4 321.7 L1552.2 320.1 L1554.1 319.8 L1555.9 314.5 L1557.8 309.1 L1560.1 302.1 L1562.4 297.1 L1565.1 298.0 L1568.3 337.7 L1570.3 334.2 L1572.2 332.1 L1574.2 330.4 L1576.2 327.5 L1578.1 326.0 L1579.9 324.2 L1581.7 321.6 L1583.6 320.1 L1585.9 319.7 L1588.2 319.2 L1590.0 318.7 L1591.9 318.3 L1593.7 309.9 L1595.6 301.7 L1597.7 298.3 L1599.9 297.3 L1602.0 293.9 L1605.2 297.1 L1607.2 268.5 L1608.5 258.3 L1610.0 272.1 L1612.2 347.8 L1614.0 335.8 L1616.8 343.2 L1618.6 340.5 L1620.5 340.0 L1622.3 337.8 L1624.2 334.9 L1626.0 331.7 L1627.9 330.4 L1629.7 329.0 L1631.6 327.1 L1633.4 323.8 L1635.3 321.3 L1637.1 319.0 L1638.9 317.4 L1640.8 319.2 L1642.6 319.2" fill="none" stroke="#141414" stroke-width="1.3" stroke-linejoin="round"/><line x1="993.0" y1="273.5" x2="993.0" y2="361.0" stroke="#c05cc0" stroke-width="1.6" /><rect x="990.8" y="273.1" width="4.4" height="4.2" fill="#800080" /><text x="993.0" y="265.8" font-size="10" text-anchor="middle" class="sm" >CA</text><line x1="1469.9" y1="273.5" x2="1469.9" y2="361.0" stroke="#c05cc0" stroke-width="1.6" /><rect x="1467.7" y="273.1" width="4.4" height="4.2" fill="#800080" /><text x="1469.9" y="265.8" font-size="10" text-anchor="middle" class="sm" >CA</text><path d="M342 515.0H855.7M855.7 515.5H942.1M942.1 516.0H1332.7M1332.7 516.5H1420.2M1420.2 517.0H1643" fill="none" stroke="#ff0000" stroke-width="1"/><path d="M342 537.0H638.5M638.5 537.5H754.9M754.9 538.0H1332.7M1332.7 538.5H1420.2M1420.2 539.0H1643" fill="none" stroke="#008000" stroke-width="1"/><path d="M341.5 753.6 H437 V750.0 H537 V747.0 H625 V750.0 H740 V738.0 H755 V744.0 H769 V753.6 H827 V741.0 H842 V753.6 H1001 V750.0 H1015 V753.6 H1030 V738.0 H1044 V747.0 H1059 V744.0 H1073 V747.0 H1116 V753.6 H1247 V750.0 H1276 V747.0 H1290 V744.0 H1332 V747.0 H1348 V750.0 H1362 V753.6 H1464 V750.0 H1478 V747.0 H1493 V744.0 H1507 V747.0 H1579 V750.0 H1594 V747.0 H1608 V753.6 H1644 V753.6" fill="none" stroke="#008000" stroke-width="1.05"/><rect x="342.0" y="250.8" width="1302.0" height="136.39999999999998" fill="none" stroke="#747474" stroke-width="2"/><rect x="342.0" y="434.8" width="1302.0" height="136.40000000000003" fill="none" stroke="#747474" stroke-width="2"/><rect x="342.0" y="618.8" width="1302.0" height="136.4000000000001" fill="none" stroke="#747474" stroke-width="2"/><rect x="342.0" y="802.8" width="1302.0" height="136.4000000000001" fill="none" stroke="#747474" stroke-width="2"/><rect x="1659.0" y="50.0" width="17.0" height="935.0" fill="#f9f9f9" /><line x1="1659.5" y1="50.0" x2="1659.5" y2="985.0" stroke="#e6e6e6" stroke-width="1" /><rect x="1663.6" y="51.5" width="7.6" height="102" rx="3.8" fill="#c1c1c1"/><line x1="1676.5" y1="34.0" x2="1676.5" y2="1015.0" stroke="#d6d6d6" stroke-width="1" /><rect x="251.0" y="985.0" width="1425.0" height="29.5" fill="#f3f3f3" /><line x1="251.0" y1="985.0" x2="1676.0" y2="985.0" stroke="#c8c8c8" stroke-width="1.6" /><line x1="251.0" y1="1014.6" x2="1676.0" y2="1014.6" stroke="#dedede" stroke-width="1" /><rect x="0.0" y="1015.0" width="1680.0" height="5.0" fill="#f3f3f3" /><line x1="0.0" y1="1020.2" x2="1680.0" y2="1020.2" stroke="#b9b9b9" stroke-width="1" /><rect x="0.0" y="1020.7" width="1680.0" height="3.3" fill="#d0d0d0" /><path d="M264.8 998.2 H272.7 L268.75 1005.2 Z" fill="#6e6e6e"/><text x="280.5" y="1003.2" font-size="10" class="sm" textLength="22.3" lengthAdjust="spacingAndGlyphs">Flags</text><rect x="313.5" y="989.9" width="82.39999999999998" height="18.5" rx="4" fill="#ffffff" stroke="#d0d0d0" stroke-width="1"/><path d="M380 989.4 H392.4 A4 4 0 0 1 396.4 993.4 V1004.7 A4 4 0 0 1 392.4 1008.7 H380 Z" fill="url(#step)"/><path d="M384.3 997.6 L388.2 993.7 L392.09999999999997 997.6 M384.3 1001.2 L388.2 1005.1 L392.09999999999997 1001.2" fill="none" stroke="#f6f6f6" stroke-width="1.2"/><text x="341.5" y="1003.0" font-size="10" class="sm" textLength="9.4" lengthAdjust="spacingAndGlyphs">LL</text><rect x="321.8" y="996.0" width="8.0" height="5.0" fill="#050505" /><rect x="329.8" y="996.0" width="8.0" height="5.0" fill="#2e8a0e" /><text x="924.2" y="1004.0" font-size="13" text-anchor="middle" >Sep 22 23:42:13.310</text><path d="M1463.1 998.2 H1471.4 L1467.25 1005.2 Z" fill="#6e6e6e"/><text x="1478.0" y="1003.2" font-size="10" class="sm" textLength="33.6" lengthAdjust="spacingAndGlyphs">Graphs</text><rect x="1521.4" y="989.9" width="149.5999999999999" height="18.5" rx="4" fill="#ffffff" stroke="#d0d0d0" stroke-width="1"/><path d="M1655.2 989.4 H1667.5 A4 4 0 0 1 1671.5 993.4 V1004.7 A4 4 0 0 1 1667.5 1008.7 H1655.2 Z" fill="url(#step)"/><path d="M1659.4499999999998 997.6 L1663.35 993.7 L1667.25 997.6 M1659.4499999999998 1001.2 L1663.35 1005.1 L1667.25 1001.2" fill="none" stroke="#f6f6f6" stroke-width="1.2"/><text x="1553.6" y="1003.0" font-size="10" class="sm" textLength="50.9" lengthAdjust="spacingAndGlyphs">Event Flags</text><rect x="1530.0" y="995.3" width="9.9" height="5.4" fill="#050505" /><rect x="1539.9" y="995.3" width="9.9" height="5.4" fill="#2e8a0e" /><rect x="244.0" y="527.3" width="7.0" height="9.8" fill="#fafafa" /><circle cx="247.4" cy="532.2" r="2.6" fill="#d4d4d4"/></svg></body></html>
